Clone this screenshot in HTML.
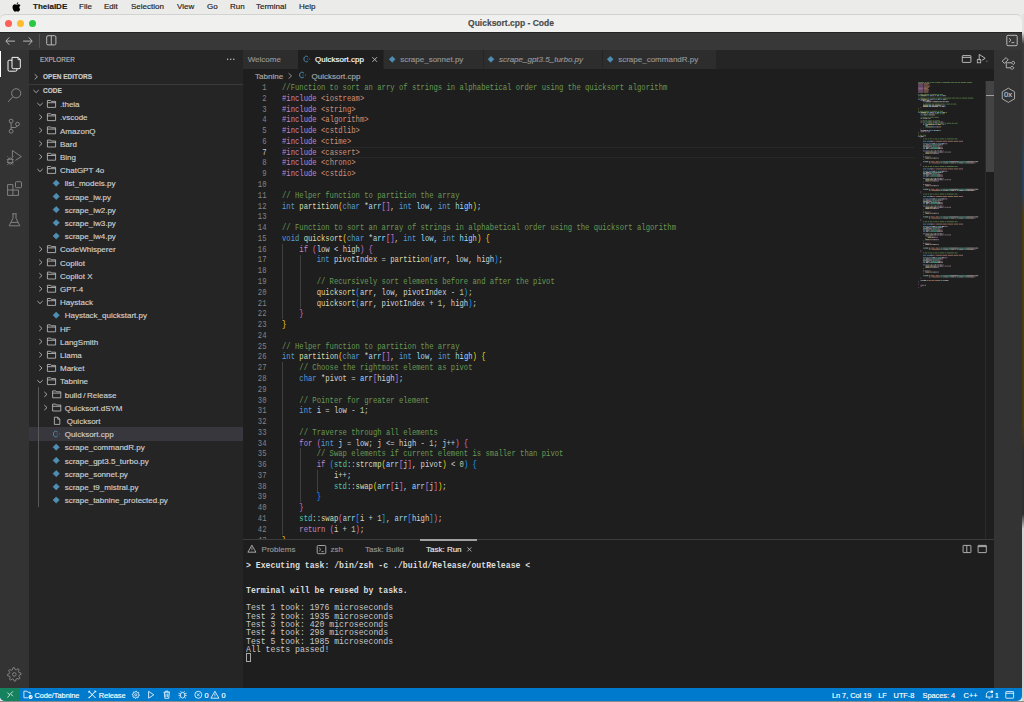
<!DOCTYPE html><html><head><meta charset="utf-8"><style>
*{margin:0;padding:0;box-sizing:border-box}
html,body{width:1024px;height:702px;overflow:hidden;background:#e8e8e6;font-family:"Liberation Sans",sans-serif}
.a{position:absolute}
svg{position:absolute;overflow:visible;left:0;top:0}
.t{position:absolute;white-space:pre;-webkit-text-stroke:0.15px currentColor}
.m{font-family:"Liberation Mono",monospace;-webkit-text-stroke:0}
</style></head><body>
<div class="a" style="left:0px;top:0px;width:1024px;height:14px;background:#ebebe9;"></div>
<svg style="left:12px;top:2px" width="9" height="10" viewBox="0 0 9 10"><path d="M6.2 0.3c0.1 0.8-0.6 1.9-1.5 1.9-0.1-0.8 0.6-1.8 1.5-1.9zM8.2 7.1c-0.3 0.9-1.1 2.6-2 2.6-0.7 0-0.9-0.4-1.6-0.4s-1 0.4-1.6 0.4C2 9.7 0.5 7.3 0.5 5.2c0-2 1.3-2.9 2.3-2.9 0.8 0 1.3 0.4 1.8 0.4 0.4 0 1-0.5 1.9-0.5 0.4 0 1.5 0.1 2 1.1-1.7 1-1.4 3.3-0.3 3.8z" fill="#000"/></svg>
<div class="t" style="left:33px;top:2px;font-size:8px;line-height:10px;color:#1a1a1a;font-weight:bold">TheiaIDE</div>
<div class="t" style="left:79px;top:2px;font-size:8px;line-height:10px;color:#1a1a1a;">File</div>
<div class="t" style="left:104px;top:2px;font-size:8px;line-height:10px;color:#1a1a1a;">Edit</div>
<div class="t" style="left:131px;top:2px;font-size:8px;line-height:10px;color:#1a1a1a;">Selection</div>
<div class="t" style="left:177px;top:2px;font-size:8px;line-height:10px;color:#1a1a1a;">View</div>
<div class="t" style="left:207px;top:2px;font-size:8px;line-height:10px;color:#1a1a1a;">Go</div>
<div class="t" style="left:230px;top:2px;font-size:8px;line-height:10px;color:#1a1a1a;">Run</div>
<div class="t" style="left:256px;top:2px;font-size:8px;line-height:10px;color:#1a1a1a;">Terminal</div>
<div class="t" style="left:299px;top:2px;font-size:8px;line-height:10px;color:#1a1a1a;">Help</div>
<div class="a" style="left:1022px;top:14px;width:2px;height:688px;background:linear-gradient(#e2e2e0 0px,#e2e2e0 18px,#3a3a3a 30px,#383838 120px,#2a4058 150px,#2a4058 180px,#4a3c18 200px,#4a3c18 410px,#2e2e2e 440px,#2e2e2e 500px,#d4d4d4 515px,#d4d4d4 688px);"></div>
<div class="a" style="left:0px;top:14px;width:1022px;height:18px;background:#f0f0ee;border-top:1px solid #d2d2d0;border-radius:6px 6px 0 0"></div>
<div class="a" style="left:5px;top:19.5px;width:7px;height:7px;background:#fe5f57;border-radius:50%"></div>
<div class="a" style="left:17px;top:19.5px;width:7px;height:7px;background:#febc2e;border-radius:50%"></div>
<div class="a" style="left:29px;top:19.5px;width:7px;height:7px;background:#28c840;border-radius:50%"></div>
<div class="t" style="left:0px;top:18px;font-size:8.5px;line-height:10px;color:#4a4a4a;width:1022px;text-align:center;font-weight:bold">Quicksort.cpp - Code</div>
<div class="a" style="left:0px;top:32px;width:1022px;height:18px;background:#383838;border-top:1px solid #242424"></div>
<div class="a" style="left:0px;top:50px;width:29px;height:638px;background:#333333;"></div>
<div class="a" style="left:29px;top:50px;width:214px;height:638px;background:#252526;"></div>
<div class="a" style="left:243px;top:50px;width:751px;height:489px;background:#1e1e1e;"></div>
<div class="a" style="left:243px;top:50px;width:751px;height:19px;background:#252526;"></div>
<div class="a" style="left:994px;top:50px;width:28px;height:638px;background:#333333;"></div>
<div class="a" style="left:243px;top:539px;width:751px;height:149px;background:#1e1e1e;border-top:1px solid #3c3c3c"></div>
<div class="a" style="left:0px;top:688px;width:1022px;height:13px;background:#007acc;border-radius:0 0 5px 5px"></div>
<div class="a" style="left:0px;top:688px;width:20px;height:13px;background:#16825d;border-radius:0 0 0 5px"></div>
<svg width="1" height="1"><path d="M15 41.1H6.3M9.3 37.4L5.9 41.1L9.3 44.8" fill="none" stroke="#c5c5c5" stroke-width="0.9"/><path d="M23.1 41.1H31.8M28.8 37.4L32.2 41.1L28.8 44.8" fill="none" stroke="#c5c5c5" stroke-width="0.9"/><path d="M39.5 33.8V47.8" stroke="#5a5a5a" stroke-width="0.8"/><rect x="46.7" y="35.7" width="9.2" height="9.2" rx="1.3" fill="none" stroke="#c5c5c5" stroke-width="0.9"/><path d="M51.3 35.7V44.9" stroke="#c5c5c5" stroke-width="0.9"/><rect x="1006.8" y="35.3" width="10.4" height="10.4" rx="1.2" fill="none" stroke="#c5c5c5" stroke-width="0.9"/><path d="M1009 38.3L1011 40.2L1009 42.1M1011.5 42.6H1014.3" fill="none" stroke="#c5c5c5" stroke-width="0.9"/></svg>
<div class="a" style="left:0px;top:51px;width:1.2px;height:26px;background:#ffffff;"></div>
<svg width="1" height="1"><path d="M12 57.4H18.2L20.3 59.5V67.4a1.3 1.3 0 0 1-1.3 1.3H13.3a1.3 1.3 0 0 1-1.3-1.3Z" fill="none" stroke="#ffffff" stroke-width="0.95"/><path d="M12 60.2H9.3a1.3 1.3 0 0 0-1.3 1.3V69.9a1.3 1.3 0 0 0 1.3 1.3H15.6a1.3 1.3 0 0 0 1.3-1.3V68.7" fill="none" stroke="#ffffff" stroke-width="0.95"/><path d="M18 57.4V59.6H20.3" fill="none" stroke="#ffffff" stroke-width="0.8"/></svg>
<svg width="1" height="1"><circle cx="16.2" cy="93.3" r="4.6" fill="none" stroke="#8a8a8a" stroke-width="0.95"/><path d="M13 96.6L8.2 101.8" stroke="#8a8a8a" stroke-width="1"/></svg>
<svg width="1" height="1"><circle cx="11.1" cy="121.1" r="1.9" fill="none" stroke="#8a8a8a" stroke-width="0.9"/><circle cx="17.5" cy="124.1" r="1.9" fill="none" stroke="#8a8a8a" stroke-width="0.9"/><circle cx="11.1" cy="131.2" r="1.9" fill="none" stroke="#8a8a8a" stroke-width="0.9"/><path d="M11.1 123V129.3M17 125.9L15.8 127.5H11.1" fill="none" stroke="#8a8a8a" stroke-width="0.9"/></svg>
<svg width="1" height="1"><path d="M12.4 150.5L21.3 156.6L15.4 160.4M12.4 150.5V157.5" fill="none" stroke="#8a8a8a" stroke-width="0.9"/><ellipse cx="10.3" cy="161" rx="2.6" ry="3" fill="none" stroke="#8a8a8a" stroke-width="0.9"/><path d="M6.8 159.5H13.8M6.9 162.5H13.7M8.3 157.5L7.2 156.4M12.3 157.5L13.4 156.4M8 164.2L7 165.2M12.6 164.2L13.6 165.2" stroke="#8a8a8a" stroke-width="0.7"/></svg>
<svg width="1" height="1"><path d="M7.6 184.6H12.9V190H18.5V195.4H7.6Z M7.6 190H12.9V195.4" fill="none" stroke="#8a8a8a" stroke-width="0.9" stroke-linejoin="round"/><rect x="15.5" y="181.7" width="6" height="6" rx="0.9" fill="none" stroke="#8a8a8a" stroke-width="0.9"/></svg>
<svg width="1" height="1"><path d="M12.2 213.8H16.6M13 213.8V218.2L9.2 225.8H19.8L16 218.2V213.8M11 222.4H18" fill="none" stroke="#8a8a8a" stroke-width="0.9" stroke-linejoin="round"/></svg>
<svg width="1" height="1"><path d="M20.96 673.05L21.10 674.38L19.11 675.34L18.83 676.26L19.97 678.16L19.13 679.19L17.04 678.46L16.19 678.92L15.65 681.06L14.32 681.20L13.36 679.21L12.44 678.93L10.54 680.07L9.51 679.23L10.24 677.14L9.78 676.29L7.64 675.75L7.50 674.42L9.49 673.46L9.77 672.54L8.63 670.64L9.47 669.61L11.56 670.34L12.41 669.88L12.95 667.74L14.28 667.60L15.24 669.59L16.16 669.87L18.06 668.73L19.09 669.57L18.36 671.66L18.82 672.51Z" fill="none" stroke="#8a8a8a" stroke-width="0.9" stroke-linejoin="round"/><circle cx="14.3" cy="674.4" r="1.8" fill="none" stroke="#8a8a8a" stroke-width="0.9"/></svg>
<div class="t" style="left:40px;top:55px;font-size:6.4px;line-height:10px;color:#bbbbbb;">EXPLORER</div>
<svg width="1" height="1"><circle cx="227.60" cy="59.3" r="0.75" fill="#c5c5c5"/><circle cx="230.70" cy="59.3" r="0.75" fill="#c5c5c5"/><circle cx="233.80" cy="59.3" r="0.75" fill="#c5c5c5"/></svg>
<svg width="1" height="1"><path d="M34.7 74.3L37.400000000000006 76.8L34.7 79.3" fill="none" stroke="#c5c5c5" stroke-width="0.8"/></svg>
<div class="t" style="left:43px;top:71.8px;font-size:6.5px;line-height:10px;color:#cccccc;font-weight:bold">OPEN EDITORS</div>
<div class="a" style="left:29px;top:84.2px;width:214px;height:0.8px;background:#3a3a3a;"></div>
<svg width="1" height="1"><path d="M33.4 90.0L36.1 92.6L38.800000000000004 90.0" fill="none" stroke="#c5c5c5" stroke-width="0.8"/></svg>
<div class="t" style="left:43px;top:86.3px;font-size:6.5px;line-height:10px;color:#cccccc;font-weight:bold">CODE</div>
<div class="t" style="left:60px;top:98.2px;font-size:8px;line-height:13.2px;color:#d0d0d0;">.theia</div>
<div class="t" style="left:60px;top:111.4px;font-size:8px;line-height:13.2px;color:#d0d0d0;">.vscode</div>
<div class="t" style="left:60px;top:124.6px;font-size:8px;line-height:13.2px;color:#d0d0d0;">AmazonQ</div>
<div class="t" style="left:60px;top:137.8px;font-size:8px;line-height:13.2px;color:#d0d0d0;">Bard</div>
<div class="t" style="left:60px;top:151.0px;font-size:8px;line-height:13.2px;color:#d0d0d0;">Bing</div>
<div class="t" style="left:60px;top:164.2px;font-size:8px;line-height:13.2px;color:#d0d0d0;">ChatGPT 4o</div>
<div class="t" style="left:64.7px;top:177.4px;font-size:8px;line-height:13.2px;color:#d0d0d0;">list_models.py</div>
<div class="t" style="left:64.7px;top:190.6px;font-size:8px;line-height:13.2px;color:#d0d0d0;">scrape_iw.py</div>
<div class="t" style="left:64.7px;top:203.8px;font-size:8px;line-height:13.2px;color:#d0d0d0;">scrape_iw2.py</div>
<div class="t" style="left:64.7px;top:217.0px;font-size:8px;line-height:13.2px;color:#d0d0d0;">scrape_iw3.py</div>
<div class="t" style="left:64.7px;top:230.2px;font-size:8px;line-height:13.2px;color:#d0d0d0;">scrape_iw4.py</div>
<div class="t" style="left:60px;top:243.4px;font-size:8px;line-height:13.2px;color:#d0d0d0;">CodeWhisperer</div>
<div class="t" style="left:60px;top:256.6px;font-size:8px;line-height:13.2px;color:#d0d0d0;">Copilot</div>
<div class="t" style="left:60px;top:269.8px;font-size:8px;line-height:13.2px;color:#d0d0d0;">Copilot X</div>
<div class="t" style="left:60px;top:283.0px;font-size:8px;line-height:13.2px;color:#d0d0d0;">GPT-4</div>
<div class="t" style="left:60px;top:296.2px;font-size:8px;line-height:13.2px;color:#d0d0d0;">Haystack</div>
<div class="t" style="left:64.7px;top:309.4px;font-size:8px;line-height:13.2px;color:#d0d0d0;">Haystack_quickstart.py</div>
<div class="t" style="left:60px;top:322.6px;font-size:8px;line-height:13.2px;color:#d0d0d0;">HF</div>
<div class="t" style="left:60px;top:335.8px;font-size:8px;line-height:13.2px;color:#d0d0d0;">LangSmith</div>
<div class="t" style="left:60px;top:349.0px;font-size:8px;line-height:13.2px;color:#d0d0d0;">Llama</div>
<div class="t" style="left:60px;top:362.2px;font-size:8px;line-height:13.2px;color:#d0d0d0;">Market</div>
<div class="t" style="left:60px;top:375.4px;font-size:8px;line-height:13.2px;color:#d0d0d0;">Tabnine</div>
<div class="t" style="left:64.7px;top:388.6px;font-size:8px;line-height:13.2px;color:#d0d0d0;">build / Release</div>
<div class="t" style="left:64.7px;top:401.8px;font-size:8px;line-height:13.2px;color:#d0d0d0;">Quicksort.dSYM</div>
<div class="t" style="left:66.7px;top:415.0px;font-size:8px;line-height:13.2px;color:#d0d0d0;">Quicksort</div>
<div class="a" style="left:29px;top:427.4px;width:214px;height:13.2px;background:#37373d;"></div>
<div class="t" style="left:64.7px;top:428.2px;font-size:8px;line-height:13.2px;color:#d0d0d0;">Quicksort.cpp</div>
<div class="t" style="left:64.7px;top:441.4px;font-size:8px;line-height:13.2px;color:#d0d0d0;">scrape_commandR.py</div>
<div class="t" style="left:64.7px;top:454.6px;font-size:8px;line-height:13.2px;color:#d0d0d0;">scrape_gpt3.5_turbo.py</div>
<div class="t" style="left:64.7px;top:467.8px;font-size:8px;line-height:13.2px;color:#d0d0d0;">scrape_sonnet.py</div>
<div class="t" style="left:64.7px;top:481.0px;font-size:8px;line-height:13.2px;color:#d0d0d0;">scrape_t9_mistral.py</div>
<div class="t" style="left:64.7px;top:494.2px;font-size:8px;line-height:13.2px;color:#d0d0d0;">scrape_tabnine_protected.py</div>
<svg width="1" height="1"><path d="M37.3 103.0L40 105.6L42.7 103.0" fill="none" stroke="#c5c5c5" stroke-width="0.8"/><path d="M47.4 100.5H50.6L51.4 101.39999999999999H55.6V107.39999999999999H47.4Z M47.4 102.69999999999999H55.6" fill="none" stroke="#c5c5c5" stroke-width="0.8"/><path d="M39.3 114.7L42.0 117.2L39.3 119.7" fill="none" stroke="#c5c5c5" stroke-width="0.8"/><path d="M47.4 113.7H50.6L51.4 114.6H55.6V120.6H47.4Z M47.4 115.89999999999999H55.6" fill="none" stroke="#c5c5c5" stroke-width="0.8"/><path d="M39.3 127.9L42.0 130.4L39.3 132.9" fill="none" stroke="#c5c5c5" stroke-width="0.8"/><path d="M47.4 126.9H50.6L51.4 127.8H55.6V133.8H47.4Z M47.4 129.1H55.6" fill="none" stroke="#c5c5c5" stroke-width="0.8"/><path d="M39.3 141.1L42.0 143.6L39.3 146.1" fill="none" stroke="#c5c5c5" stroke-width="0.8"/><path d="M47.4 140.1H50.6L51.4 141.0H55.6V147.0H47.4Z M47.4 142.29999999999998H55.6" fill="none" stroke="#c5c5c5" stroke-width="0.8"/><path d="M39.3 154.3L42.0 156.8L39.3 159.3" fill="none" stroke="#c5c5c5" stroke-width="0.8"/><path d="M47.4 153.3H50.6L51.4 154.20000000000002H55.6V160.20000000000002H47.4Z M47.4 155.5H55.6" fill="none" stroke="#c5c5c5" stroke-width="0.8"/><path d="M37.3 169.0L40 171.6L42.7 169.0" fill="none" stroke="#c5c5c5" stroke-width="0.8"/><path d="M47.4 166.5H50.6L51.4 167.4H55.6V173.4H47.4Z M47.4 168.7H55.6" fill="none" stroke="#c5c5c5" stroke-width="0.8"/><path d="M56.2 180.1L59.300000000000004 183.2L56.2 186.29999999999998L53.1 183.2Z" fill="#4f8fb3" stroke="#4f8fb3" stroke-width="0.7" stroke-linejoin="round"/><path d="M56.2 193.29999999999998L59.300000000000004 196.39999999999998L56.2 199.49999999999997L53.1 196.39999999999998Z" fill="#4f8fb3" stroke="#4f8fb3" stroke-width="0.7" stroke-linejoin="round"/><path d="M56.2 206.5L59.300000000000004 209.6L56.2 212.7L53.1 209.6Z" fill="#4f8fb3" stroke="#4f8fb3" stroke-width="0.7" stroke-linejoin="round"/><path d="M56.2 219.70000000000002L59.300000000000004 222.8L56.2 225.9L53.1 222.8Z" fill="#4f8fb3" stroke="#4f8fb3" stroke-width="0.7" stroke-linejoin="round"/><path d="M56.2 232.9L59.300000000000004 236.0L56.2 239.1L53.1 236.0Z" fill="#4f8fb3" stroke="#4f8fb3" stroke-width="0.7" stroke-linejoin="round"/><path d="M39.3 246.7L42.0 249.2L39.3 251.7" fill="none" stroke="#c5c5c5" stroke-width="0.8"/><path d="M47.4 245.7H50.6L51.4 246.6H55.6V252.6H47.4Z M47.4 247.89999999999998H55.6" fill="none" stroke="#c5c5c5" stroke-width="0.8"/><path d="M39.3 259.9L42.0 262.4L39.3 264.9" fill="none" stroke="#c5c5c5" stroke-width="0.8"/><path d="M47.4 258.9H50.6L51.4 259.8H55.6V265.8H47.4Z M47.4 261.1H55.6" fill="none" stroke="#c5c5c5" stroke-width="0.8"/><path d="M39.3 273.1L42.0 275.6L39.3 278.1" fill="none" stroke="#c5c5c5" stroke-width="0.8"/><path d="M47.4 272.1H50.6L51.4 273.00000000000006H55.6V279.00000000000006H47.4Z M47.4 274.30000000000007H55.6" fill="none" stroke="#c5c5c5" stroke-width="0.8"/><path d="M39.3 286.29999999999995L42.0 288.79999999999995L39.3 291.29999999999995" fill="none" stroke="#c5c5c5" stroke-width="0.8"/><path d="M47.4 285.29999999999995H50.6L51.4 286.2H55.6V292.2H47.4Z M47.4 287.5H55.6" fill="none" stroke="#c5c5c5" stroke-width="0.8"/><path d="M37.3 301.0L40 303.6L42.7 301.0" fill="none" stroke="#c5c5c5" stroke-width="0.8"/><path d="M47.4 298.5H50.6L51.4 299.40000000000003H55.6V305.40000000000003H47.4Z M47.4 300.70000000000005H55.6" fill="none" stroke="#c5c5c5" stroke-width="0.8"/><path d="M56.2 312.09999999999997L59.300000000000004 315.2L56.2 318.3L53.1 315.2Z" fill="#4f8fb3" stroke="#4f8fb3" stroke-width="0.7" stroke-linejoin="round"/><path d="M39.3 325.9L42.0 328.4L39.3 330.9" fill="none" stroke="#c5c5c5" stroke-width="0.8"/><path d="M47.4 324.9H50.6L51.4 325.8H55.6V331.8H47.4Z M47.4 327.1H55.6" fill="none" stroke="#c5c5c5" stroke-width="0.8"/><path d="M39.3 339.1L42.0 341.6L39.3 344.1" fill="none" stroke="#c5c5c5" stroke-width="0.8"/><path d="M47.4 338.1H50.6L51.4 339.00000000000006H55.6V345.00000000000006H47.4Z M47.4 340.30000000000007H55.6" fill="none" stroke="#c5c5c5" stroke-width="0.8"/><path d="M39.3 352.29999999999995L42.0 354.79999999999995L39.3 357.29999999999995" fill="none" stroke="#c5c5c5" stroke-width="0.8"/><path d="M47.4 351.29999999999995H50.6L51.4 352.2H55.6V358.2H47.4Z M47.4 353.5H55.6" fill="none" stroke="#c5c5c5" stroke-width="0.8"/><path d="M39.3 365.5L42.0 368.0L39.3 370.5" fill="none" stroke="#c5c5c5" stroke-width="0.8"/><path d="M47.4 364.5H50.6L51.4 365.40000000000003H55.6V371.40000000000003H47.4Z M47.4 366.70000000000005H55.6" fill="none" stroke="#c5c5c5" stroke-width="0.8"/><path d="M37.3 380.2L40 382.8L42.7 380.2" fill="none" stroke="#c5c5c5" stroke-width="0.8"/><path d="M47.4 377.7H50.6L51.4 378.6H55.6V384.6H47.4Z M47.4 379.90000000000003H55.6" fill="none" stroke="#c5c5c5" stroke-width="0.8"/><path d="M44.3 391.9L47.0 394.4L44.3 396.9" fill="none" stroke="#c5c5c5" stroke-width="0.8"/><path d="M52.6 390.9H55.800000000000004L56.6 391.8H60.800000000000004V397.8H52.6Z M52.6 393.1H60.800000000000004" fill="none" stroke="#c5c5c5" stroke-width="0.8"/><path d="M44.3 405.09999999999997L47.0 407.59999999999997L44.3 410.09999999999997" fill="none" stroke="#c5c5c5" stroke-width="0.8"/><path d="M52.6 404.09999999999997H55.800000000000004L56.6 405.0H60.800000000000004V411.0H52.6Z M52.6 406.3H60.800000000000004" fill="none" stroke="#c5c5c5" stroke-width="0.8"/><path d="M54.4 417.19999999999993H57.8L59.8 419.19999999999993V424.4H54.4Z M57.8 417.19999999999993V419.19999999999993H59.8" fill="none" stroke="#c5c5c5" stroke-width="0.8"/><path d="M57.70 432.15C57.20 431.50 56.40 431.15 55.80 431.15C54.30 431.15 53.40 432.45 53.40 434.00C53.40 435.55 54.30 436.85 55.80 436.85C56.40 436.85 57.20 436.50 57.70 435.85" fill="none" stroke="#4f8ab0" stroke-width="0.95"/><path d="M56.30 434.00H57.40" stroke="#4f8ab0" stroke-width="0.7"/><circle cx="59.20" cy="434.00" r="0.55" fill="#4f8ab0"/><path d="M56.2 444.09999999999997L59.300000000000004 447.2L56.2 450.3L53.1 447.2Z" fill="#4f8fb3" stroke="#4f8fb3" stroke-width="0.7" stroke-linejoin="round"/><path d="M56.2 457.29999999999995L59.300000000000004 460.4L56.2 463.5L53.1 460.4Z" fill="#4f8fb3" stroke="#4f8fb3" stroke-width="0.7" stroke-linejoin="round"/><path d="M56.2 470.49999999999994L59.300000000000004 473.59999999999997L56.2 476.7L53.1 473.59999999999997Z" fill="#4f8fb3" stroke="#4f8fb3" stroke-width="0.7" stroke-linejoin="round"/><path d="M56.2 483.69999999999993L59.300000000000004 486.79999999999995L56.2 489.9L53.1 486.79999999999995Z" fill="#4f8fb3" stroke="#4f8fb3" stroke-width="0.7" stroke-linejoin="round"/><path d="M56.2 496.9L59.300000000000004 500.0L56.2 503.1L53.1 500.0Z" fill="#4f8fb3" stroke="#4f8fb3" stroke-width="0.7" stroke-linejoin="round"/></svg>
<div class="a" style="left:38.4px;top:386.7px;width:0.7px;height:120.8px;background:#585858;"></div>
<div class="a" style="left:243px;top:50px;width:55px;height:19px;background:#2d2d2d;"></div>
<div class="t" style="left:247.7px;top:54.5px;font-size:8px;line-height:10px;color:#969696;">Welcome</div>
<div class="a" style="left:298px;top:50px;width:84.5px;height:19px;background:#1e1e1e;"></div>
<svg width="1" height="1"><path d="M308.20 57.15C307.70 56.50 306.90 56.15 306.30 56.15C304.80 56.15 303.90 57.45 303.90 59.00C303.90 60.55 304.80 61.85 306.30 61.85C306.90 61.85 307.70 61.50 308.20 60.85" fill="none" stroke="#4f8ab0" stroke-width="0.95"/><path d="M306.80 59.00H307.90" stroke="#4f8ab0" stroke-width="0.7"/><circle cx="309.70" cy="59.00" r="0.55" fill="#4f8ab0"/></svg>
<div class="t" style="left:315px;top:54.5px;font-size:8px;line-height:10px;color:#ffffff;">Quicksort.cpp</div>
<svg width="1" height="1"><path d="M372.4 57.2L377 61.8M377 57.2L372.4 61.8" stroke="#c5c5c5" stroke-width="0.9"/></svg>
<div class="a" style="left:382.5px;top:50px;width:100px;height:19px;background:#2d2d2d;border-left:1px solid #252526"></div>
<svg width="1" height="1"><path d="M392.2 56.4L395.09999999999997 59.3L392.2 62.199999999999996L389.3 59.3Z" fill="#4f8fb3" stroke="#4f8fb3" stroke-width="0.7" stroke-linejoin="round"/></svg>
<div class="t" style="left:400.2px;top:54.5px;font-size:8px;line-height:10px;color:#969696;">scrape_sonnet.py</div>
<div class="a" style="left:482.5px;top:50px;width:119px;height:19px;background:#2d2d2d;border-left:1px solid #252526"></div>
<svg width="1" height="1"><path d="M491 56.4L493.9 59.3L491 62.199999999999996L488.1 59.3Z" fill="#4f8fb3" stroke="#4f8fb3" stroke-width="0.7" stroke-linejoin="round"/></svg>
<div class="t" style="left:499px;top:54.5px;font-size:8px;line-height:10px;color:#969696;font-style:italic">scrape_gpt3.5_turbo.py</div>
<div class="a" style="left:601.5px;top:50px;width:114px;height:19px;background:#2d2d2d;border-left:1px solid #252526"></div>
<svg width="1" height="1"><path d="M610.2 56.4L613.1 59.3L610.2 62.199999999999996L607.3000000000001 59.3Z" fill="#4f8fb3" stroke="#4f8fb3" stroke-width="0.7" stroke-linejoin="round"/></svg>
<div class="t" style="left:618.2px;top:54.5px;font-size:8px;line-height:10px;color:#969696;">scrape_commandR.py</div>
<svg width="1" height="1"><rect x="962.3" y="55.6" width="8.6" height="6.8" rx="0.5" fill="none" stroke="#c5c5c5" stroke-width="0.9"/><path d="M962.3 57.4H970.9" stroke="#c5c5c5" stroke-width="0.9"/><path d="M979.2 54.4V60.3M979.2 54.4L985.2 58.3L981.8 60.4" fill="none" stroke="#c5c5c5" stroke-width="0.9"/><rect x="977.3" y="59.6" width="3.4" height="3.2" fill="none" stroke="#c5c5c5" stroke-width="0.8"/><path d="M986.2 60.8L987 61.6L987.8 60.8" fill="none" stroke="#c5c5c5" stroke-width="0.5"/></svg>
<div class="t" style="left:255.1px;top:71.7px;font-size:8px;line-height:10px;color:#a9a9a9;">Tabnine</div>
<svg width="1" height="1"><path d="M288.6 73.3L291.6 75.9L288.6 78.5" fill="none" stroke="#a9a9a9" stroke-width="0.8"/></svg>
<svg width="1" height="1"><path d="M303.90 73.15C303.40 72.50 302.60 72.15 302.00 72.15C300.50 72.15 299.60 73.45 299.60 75.00C299.60 76.55 300.50 77.85 302.00 77.85C302.60 77.85 303.40 77.50 303.90 76.85" fill="none" stroke="#4f8ab0" stroke-width="0.95"/><path d="M302.50 75.00H303.60" stroke="#4f8ab0" stroke-width="0.7"/><circle cx="305.40" cy="75.00" r="0.55" fill="#4f8ab0"/></svg>
<div class="t" style="left:311.5px;top:71.7px;font-size:8px;line-height:10px;color:#a9a9a9;">Quicksort.cpp</div>
<div class="a" style="left:282px;top:146.76px;width:632px;height:10.78px;background:transparent;border-top:1px solid #282828;border-bottom:1px solid #282828"></div>
<div class="a" style="left:282.3px;top:243.74px;width:0.7px;height:75.43px;background:#404040;"></div>
<div class="a" style="left:299.62px;top:254.52px;width:0.7px;height:53.88px;background:#404040;"></div>
<div class="a" style="left:282.3px;top:362.28px;width:0.7px;height:172.42px;background:#404040;"></div>
<div class="a" style="left:299.62px;top:448.48px;width:0.7px;height:53.88px;background:#404040;"></div>
<div class="a" style="left:316.94px;top:470.04px;width:0.7px;height:21.55px;background:#404040;"></div>
<div class="a" style="left:243px;top:81px;width:675px;height:458px;overflow:hidden">
<div class="t m" style="left:0;top:2.00px;width:23.5px;text-align:right;font-size:8.3px;line-height:10.776px;transform:scaleX(0.8695);transform-origin:100% 0;color:#858585">1</div>
<div class="t m" style="left:39.30000000000001px;top:2.00px;font-size:8.3px;line-height:10.776px;transform:scaleX(0.8695);transform-origin:0 0"><span style="color:#6a9955">//Function to sort an arry of strings in alphabetical order using the quicksort algorithm</span></div>
<div class="t m" style="left:0;top:12.78px;width:23.5px;text-align:right;font-size:8.3px;line-height:10.776px;transform:scaleX(0.8695);transform-origin:100% 0;color:#858585">2</div>
<div class="t m" style="left:39.30000000000001px;top:12.78px;font-size:8.3px;line-height:10.776px;transform:scaleX(0.8695);transform-origin:0 0"><span style="color:#c586c0">#include</span><span style="color:#d4d4d4"> </span><span style="color:#ce9178">&lt;iostream&gt;</span></div>
<div class="t m" style="left:0;top:23.55px;width:23.5px;text-align:right;font-size:8.3px;line-height:10.776px;transform:scaleX(0.8695);transform-origin:100% 0;color:#858585">3</div>
<div class="t m" style="left:39.30000000000001px;top:23.55px;font-size:8.3px;line-height:10.776px;transform:scaleX(0.8695);transform-origin:0 0"><span style="color:#c586c0">#include</span><span style="color:#d4d4d4"> </span><span style="color:#ce9178">&lt;string&gt;</span></div>
<div class="t m" style="left:0;top:34.33px;width:23.5px;text-align:right;font-size:8.3px;line-height:10.776px;transform:scaleX(0.8695);transform-origin:100% 0;color:#858585">4</div>
<div class="t m" style="left:39.30000000000001px;top:34.33px;font-size:8.3px;line-height:10.776px;transform:scaleX(0.8695);transform-origin:0 0"><span style="color:#c586c0">#include</span><span style="color:#d4d4d4"> </span><span style="color:#ce9178">&lt;algorithm&gt;</span></div>
<div class="t m" style="left:0;top:45.10px;width:23.5px;text-align:right;font-size:8.3px;line-height:10.776px;transform:scaleX(0.8695);transform-origin:100% 0;color:#858585">5</div>
<div class="t m" style="left:39.30000000000001px;top:45.10px;font-size:8.3px;line-height:10.776px;transform:scaleX(0.8695);transform-origin:0 0"><span style="color:#c586c0">#include</span><span style="color:#d4d4d4"> </span><span style="color:#ce9178">&lt;cstdlib&gt;</span></div>
<div class="t m" style="left:0;top:55.88px;width:23.5px;text-align:right;font-size:8.3px;line-height:10.776px;transform:scaleX(0.8695);transform-origin:100% 0;color:#858585">6</div>
<div class="t m" style="left:39.30000000000001px;top:55.88px;font-size:8.3px;line-height:10.776px;transform:scaleX(0.8695);transform-origin:0 0"><span style="color:#c586c0">#include</span><span style="color:#d4d4d4"> </span><span style="color:#ce9178">&lt;ctime&gt;</span></div>
<div class="t m" style="left:0;top:66.66px;width:23.5px;text-align:right;font-size:8.3px;line-height:10.776px;transform:scaleX(0.8695);transform-origin:100% 0;color:#c6c6c6">7</div>
<div class="t m" style="left:39.30000000000001px;top:66.66px;font-size:8.3px;line-height:10.776px;transform:scaleX(0.8695);transform-origin:0 0"><span style="color:#c586c0">#include</span><span style="color:#d4d4d4"> </span><span style="color:#ce9178">&lt;cassert&gt;</span></div>
<div class="t m" style="left:0;top:77.43px;width:23.5px;text-align:right;font-size:8.3px;line-height:10.776px;transform:scaleX(0.8695);transform-origin:100% 0;color:#858585">8</div>
<div class="t m" style="left:39.30000000000001px;top:77.43px;font-size:8.3px;line-height:10.776px;transform:scaleX(0.8695);transform-origin:0 0"><span style="color:#c586c0">#include</span><span style="color:#d4d4d4"> </span><span style="color:#ce9178">&lt;chrono&gt;</span></div>
<div class="t m" style="left:0;top:88.21px;width:23.5px;text-align:right;font-size:8.3px;line-height:10.776px;transform:scaleX(0.8695);transform-origin:100% 0;color:#858585">9</div>
<div class="t m" style="left:39.30000000000001px;top:88.21px;font-size:8.3px;line-height:10.776px;transform:scaleX(0.8695);transform-origin:0 0"><span style="color:#c586c0">#include</span><span style="color:#d4d4d4"> </span><span style="color:#ce9178">&lt;cstdio&gt;</span></div>
<div class="t m" style="left:0;top:98.98px;width:23.5px;text-align:right;font-size:8.3px;line-height:10.776px;transform:scaleX(0.8695);transform-origin:100% 0;color:#858585">10</div>
<div class="t m" style="left:0;top:109.76px;width:23.5px;text-align:right;font-size:8.3px;line-height:10.776px;transform:scaleX(0.8695);transform-origin:100% 0;color:#858585">11</div>
<div class="t m" style="left:39.30000000000001px;top:109.76px;font-size:8.3px;line-height:10.776px;transform:scaleX(0.8695);transform-origin:0 0"><span style="color:#6a9955">// Helper function to partition the array</span></div>
<div class="t m" style="left:0;top:120.54px;width:23.5px;text-align:right;font-size:8.3px;line-height:10.776px;transform:scaleX(0.8695);transform-origin:100% 0;color:#858585">12</div>
<div class="t m" style="left:39.30000000000001px;top:120.54px;font-size:8.3px;line-height:10.776px;transform:scaleX(0.8695);transform-origin:0 0"><span style="color:#569cd6">int</span><span style="color:#d4d4d4"> </span><span style="color:#dcdcaa">partition</span><span style="color:#ffd700">(</span><span style="color:#569cd6">char</span><span style="color:#d4d4d4"> *</span><span style="color:#9cdcfe">arr</span><span style="color:#da70d6">[]</span><span style="color:#d4d4d4">, </span><span style="color:#569cd6">int</span><span style="color:#d4d4d4"> </span><span style="color:#9cdcfe">low</span><span style="color:#d4d4d4">, </span><span style="color:#569cd6">int</span><span style="color:#d4d4d4"> </span><span style="color:#9cdcfe">high</span><span style="color:#ffd700">)</span><span style="color:#d4d4d4">;</span></div>
<div class="t m" style="left:0;top:131.31px;width:23.5px;text-align:right;font-size:8.3px;line-height:10.776px;transform:scaleX(0.8695);transform-origin:100% 0;color:#858585">13</div>
<div class="t m" style="left:0;top:142.09px;width:23.5px;text-align:right;font-size:8.3px;line-height:10.776px;transform:scaleX(0.8695);transform-origin:100% 0;color:#858585">14</div>
<div class="t m" style="left:39.30000000000001px;top:142.09px;font-size:8.3px;line-height:10.776px;transform:scaleX(0.8695);transform-origin:0 0"><span style="color:#6a9955">// Function to sort an array of strings in alphabetical order using the quicksort algorithm</span></div>
<div class="t m" style="left:0;top:152.86px;width:23.5px;text-align:right;font-size:8.3px;line-height:10.776px;transform:scaleX(0.8695);transform-origin:100% 0;color:#858585">15</div>
<div class="t m" style="left:39.30000000000001px;top:152.86px;font-size:8.3px;line-height:10.776px;transform:scaleX(0.8695);transform-origin:0 0"><span style="color:#569cd6">void</span><span style="color:#d4d4d4"> </span><span style="color:#dcdcaa">quicksort</span><span style="color:#ffd700">(</span><span style="color:#569cd6">char</span><span style="color:#d4d4d4"> *</span><span style="color:#9cdcfe">arr</span><span style="color:#da70d6">[]</span><span style="color:#d4d4d4">, </span><span style="color:#569cd6">int</span><span style="color:#d4d4d4"> </span><span style="color:#9cdcfe">low</span><span style="color:#d4d4d4">, </span><span style="color:#569cd6">int</span><span style="color:#d4d4d4"> </span><span style="color:#9cdcfe">high</span><span style="color:#ffd700">)</span><span style="color:#d4d4d4"> </span><span style="color:#ffd700">{</span></div>
<div class="t m" style="left:0;top:163.64px;width:23.5px;text-align:right;font-size:8.3px;line-height:10.776px;transform:scaleX(0.8695);transform-origin:100% 0;color:#858585">16</div>
<div class="t m" style="left:39.30000000000001px;top:163.64px;font-size:8.3px;line-height:10.776px;transform:scaleX(0.8695);transform-origin:0 0"><span style="color:#d4d4d4">    </span><span style="color:#c586c0">if</span><span style="color:#d4d4d4"> </span><span style="color:#da70d6">(</span><span style="color:#d4d4d4">low &lt; high</span><span style="color:#da70d6">)</span><span style="color:#d4d4d4"> </span><span style="color:#da70d6">{</span></div>
<div class="t m" style="left:0;top:174.42px;width:23.5px;text-align:right;font-size:8.3px;line-height:10.776px;transform:scaleX(0.8695);transform-origin:100% 0;color:#858585">17</div>
<div class="t m" style="left:39.30000000000001px;top:174.42px;font-size:8.3px;line-height:10.776px;transform:scaleX(0.8695);transform-origin:0 0"><span style="color:#d4d4d4">        </span><span style="color:#569cd6">int</span><span style="color:#d4d4d4"> pivotIndex = </span><span style="color:#dcdcaa">partition</span><span style="color:#179fff">(</span><span style="color:#d4d4d4">arr, low, high</span><span style="color:#179fff">)</span><span style="color:#d4d4d4">;</span></div>
<div class="t m" style="left:0;top:185.19px;width:23.5px;text-align:right;font-size:8.3px;line-height:10.776px;transform:scaleX(0.8695);transform-origin:100% 0;color:#858585">18</div>
<div class="t m" style="left:0;top:195.97px;width:23.5px;text-align:right;font-size:8.3px;line-height:10.776px;transform:scaleX(0.8695);transform-origin:100% 0;color:#858585">19</div>
<div class="t m" style="left:39.30000000000001px;top:195.97px;font-size:8.3px;line-height:10.776px;transform:scaleX(0.8695);transform-origin:0 0"><span style="color:#6a9955">        // Recursively sort elements before and after the pivot</span></div>
<div class="t m" style="left:0;top:206.74px;width:23.5px;text-align:right;font-size:8.3px;line-height:10.776px;transform:scaleX(0.8695);transform-origin:100% 0;color:#858585">20</div>
<div class="t m" style="left:39.30000000000001px;top:206.74px;font-size:8.3px;line-height:10.776px;transform:scaleX(0.8695);transform-origin:0 0"><span style="color:#d4d4d4">        </span><span style="color:#dcdcaa">quicksort</span><span style="color:#179fff">(</span><span style="color:#d4d4d4">arr, low, pivotIndex - </span><span style="color:#b5cea8">1</span><span style="color:#179fff">)</span><span style="color:#d4d4d4">;</span></div>
<div class="t m" style="left:0;top:217.52px;width:23.5px;text-align:right;font-size:8.3px;line-height:10.776px;transform:scaleX(0.8695);transform-origin:100% 0;color:#858585">21</div>
<div class="t m" style="left:39.30000000000001px;top:217.52px;font-size:8.3px;line-height:10.776px;transform:scaleX(0.8695);transform-origin:0 0"><span style="color:#d4d4d4">        </span><span style="color:#dcdcaa">quicksort</span><span style="color:#179fff">(</span><span style="color:#d4d4d4">arr, pivotIndex + </span><span style="color:#b5cea8">1</span><span style="color:#d4d4d4">, high</span><span style="color:#179fff">)</span><span style="color:#d4d4d4">;</span></div>
<div class="t m" style="left:0;top:228.30px;width:23.5px;text-align:right;font-size:8.3px;line-height:10.776px;transform:scaleX(0.8695);transform-origin:100% 0;color:#858585">22</div>
<div class="t m" style="left:39.30000000000001px;top:228.30px;font-size:8.3px;line-height:10.776px;transform:scaleX(0.8695);transform-origin:0 0"><span style="color:#d4d4d4">    </span><span style="color:#da70d6">}</span></div>
<div class="t m" style="left:0;top:239.07px;width:23.5px;text-align:right;font-size:8.3px;line-height:10.776px;transform:scaleX(0.8695);transform-origin:100% 0;color:#858585">23</div>
<div class="t m" style="left:39.30000000000001px;top:239.07px;font-size:8.3px;line-height:10.776px;transform:scaleX(0.8695);transform-origin:0 0"><span style="color:#ffd700">}</span></div>
<div class="t m" style="left:0;top:249.85px;width:23.5px;text-align:right;font-size:8.3px;line-height:10.776px;transform:scaleX(0.8695);transform-origin:100% 0;color:#858585">24</div>
<div class="t m" style="left:0;top:260.62px;width:23.5px;text-align:right;font-size:8.3px;line-height:10.776px;transform:scaleX(0.8695);transform-origin:100% 0;color:#858585">25</div>
<div class="t m" style="left:39.30000000000001px;top:260.62px;font-size:8.3px;line-height:10.776px;transform:scaleX(0.8695);transform-origin:0 0"><span style="color:#6a9955">// Helper function to partition the array</span></div>
<div class="t m" style="left:0;top:271.40px;width:23.5px;text-align:right;font-size:8.3px;line-height:10.776px;transform:scaleX(0.8695);transform-origin:100% 0;color:#858585">26</div>
<div class="t m" style="left:39.30000000000001px;top:271.40px;font-size:8.3px;line-height:10.776px;transform:scaleX(0.8695);transform-origin:0 0"><span style="color:#569cd6">int</span><span style="color:#d4d4d4"> </span><span style="color:#dcdcaa">partition</span><span style="color:#ffd700">(</span><span style="color:#569cd6">char</span><span style="color:#d4d4d4"> *</span><span style="color:#9cdcfe">arr</span><span style="color:#da70d6">[]</span><span style="color:#d4d4d4">, </span><span style="color:#569cd6">int</span><span style="color:#d4d4d4"> </span><span style="color:#9cdcfe">low</span><span style="color:#d4d4d4">, </span><span style="color:#569cd6">int</span><span style="color:#d4d4d4"> </span><span style="color:#9cdcfe">high</span><span style="color:#ffd700">)</span><span style="color:#d4d4d4"> </span><span style="color:#ffd700">{</span></div>
<div class="t m" style="left:0;top:282.18px;width:23.5px;text-align:right;font-size:8.3px;line-height:10.776px;transform:scaleX(0.8695);transform-origin:100% 0;color:#858585">27</div>
<div class="t m" style="left:39.30000000000001px;top:282.18px;font-size:8.3px;line-height:10.776px;transform:scaleX(0.8695);transform-origin:0 0"><span style="color:#6a9955">    // Choose the rightmost element as pivot</span></div>
<div class="t m" style="left:0;top:292.95px;width:23.5px;text-align:right;font-size:8.3px;line-height:10.776px;transform:scaleX(0.8695);transform-origin:100% 0;color:#858585">28</div>
<div class="t m" style="left:39.30000000000001px;top:292.95px;font-size:8.3px;line-height:10.776px;transform:scaleX(0.8695);transform-origin:0 0"><span style="color:#d4d4d4">    </span><span style="color:#569cd6">char</span><span style="color:#d4d4d4"> *pivot = </span><span style="color:#9cdcfe">arr</span><span style="color:#da70d6">[</span><span style="color:#d4d4d4">high</span><span style="color:#da70d6">]</span><span style="color:#d4d4d4">;</span></div>
<div class="t m" style="left:0;top:303.73px;width:23.5px;text-align:right;font-size:8.3px;line-height:10.776px;transform:scaleX(0.8695);transform-origin:100% 0;color:#858585">29</div>
<div class="t m" style="left:0;top:314.50px;width:23.5px;text-align:right;font-size:8.3px;line-height:10.776px;transform:scaleX(0.8695);transform-origin:100% 0;color:#858585">30</div>
<div class="t m" style="left:39.30000000000001px;top:314.50px;font-size:8.3px;line-height:10.776px;transform:scaleX(0.8695);transform-origin:0 0"><span style="color:#6a9955">    // Pointer for greater element</span></div>
<div class="t m" style="left:0;top:325.28px;width:23.5px;text-align:right;font-size:8.3px;line-height:10.776px;transform:scaleX(0.8695);transform-origin:100% 0;color:#858585">31</div>
<div class="t m" style="left:39.30000000000001px;top:325.28px;font-size:8.3px;line-height:10.776px;transform:scaleX(0.8695);transform-origin:0 0"><span style="color:#d4d4d4">    </span><span style="color:#569cd6">int</span><span style="color:#d4d4d4"> i = low - </span><span style="color:#b5cea8">1</span><span style="color:#d4d4d4">;</span></div>
<div class="t m" style="left:0;top:336.06px;width:23.5px;text-align:right;font-size:8.3px;line-height:10.776px;transform:scaleX(0.8695);transform-origin:100% 0;color:#858585">32</div>
<div class="t m" style="left:0;top:346.83px;width:23.5px;text-align:right;font-size:8.3px;line-height:10.776px;transform:scaleX(0.8695);transform-origin:100% 0;color:#858585">33</div>
<div class="t m" style="left:39.30000000000001px;top:346.83px;font-size:8.3px;line-height:10.776px;transform:scaleX(0.8695);transform-origin:0 0"><span style="color:#6a9955">    // Traverse through all elements</span></div>
<div class="t m" style="left:0;top:357.61px;width:23.5px;text-align:right;font-size:8.3px;line-height:10.776px;transform:scaleX(0.8695);transform-origin:100% 0;color:#858585">34</div>
<div class="t m" style="left:39.30000000000001px;top:357.61px;font-size:8.3px;line-height:10.776px;transform:scaleX(0.8695);transform-origin:0 0"><span style="color:#d4d4d4">    </span><span style="color:#c586c0">for</span><span style="color:#d4d4d4"> </span><span style="color:#da70d6">(</span><span style="color:#569cd6">int</span><span style="color:#d4d4d4"> j = low; j &lt;= high - </span><span style="color:#b5cea8">1</span><span style="color:#d4d4d4">; j++</span><span style="color:#da70d6">)</span><span style="color:#d4d4d4"> </span><span style="color:#da70d6">{</span></div>
<div class="t m" style="left:0;top:368.38px;width:23.5px;text-align:right;font-size:8.3px;line-height:10.776px;transform:scaleX(0.8695);transform-origin:100% 0;color:#858585">35</div>
<div class="t m" style="left:39.30000000000001px;top:368.38px;font-size:8.3px;line-height:10.776px;transform:scaleX(0.8695);transform-origin:0 0"><span style="color:#6a9955">        // Swap elements if current element is smaller than pivot</span></div>
<div class="t m" style="left:0;top:379.16px;width:23.5px;text-align:right;font-size:8.3px;line-height:10.776px;transform:scaleX(0.8695);transform-origin:100% 0;color:#858585">36</div>
<div class="t m" style="left:39.30000000000001px;top:379.16px;font-size:8.3px;line-height:10.776px;transform:scaleX(0.8695);transform-origin:0 0"><span style="color:#d4d4d4">        </span><span style="color:#c586c0">if</span><span style="color:#d4d4d4"> </span><span style="color:#179fff">(</span><span style="color:#4ec9b0">std</span><span style="color:#d4d4d4">::</span><span style="color:#dcdcaa">strcmp</span><span style="color:#ffd700">(</span><span style="color:#9cdcfe">arr</span><span style="color:#da70d6">[</span><span style="color:#d4d4d4">j</span><span style="color:#da70d6">]</span><span style="color:#d4d4d4">, pivot</span><span style="color:#ffd700">)</span><span style="color:#d4d4d4"> &lt; </span><span style="color:#b5cea8">0</span><span style="color:#179fff">)</span><span style="color:#d4d4d4"> </span><span style="color:#179fff">{</span></div>
<div class="t m" style="left:0;top:389.94px;width:23.5px;text-align:right;font-size:8.3px;line-height:10.776px;transform:scaleX(0.8695);transform-origin:100% 0;color:#858585">37</div>
<div class="t m" style="left:39.30000000000001px;top:389.94px;font-size:8.3px;line-height:10.776px;transform:scaleX(0.8695);transform-origin:0 0"><span style="color:#d4d4d4">            i++;</span></div>
<div class="t m" style="left:0;top:400.71px;width:23.5px;text-align:right;font-size:8.3px;line-height:10.776px;transform:scaleX(0.8695);transform-origin:100% 0;color:#858585">38</div>
<div class="t m" style="left:39.30000000000001px;top:400.71px;font-size:8.3px;line-height:10.776px;transform:scaleX(0.8695);transform-origin:0 0"><span style="color:#d4d4d4">            </span><span style="color:#4ec9b0">std</span><span style="color:#d4d4d4">::</span><span style="color:#dcdcaa">swap</span><span style="color:#ffd700">(</span><span style="color:#9cdcfe">arr</span><span style="color:#da70d6">[</span><span style="color:#d4d4d4">i</span><span style="color:#da70d6">]</span><span style="color:#d4d4d4">, </span><span style="color:#9cdcfe">arr</span><span style="color:#da70d6">[</span><span style="color:#d4d4d4">j</span><span style="color:#da70d6">]</span><span style="color:#ffd700">)</span><span style="color:#d4d4d4">;</span></div>
<div class="t m" style="left:0;top:411.49px;width:23.5px;text-align:right;font-size:8.3px;line-height:10.776px;transform:scaleX(0.8695);transform-origin:100% 0;color:#858585">39</div>
<div class="t m" style="left:39.30000000000001px;top:411.49px;font-size:8.3px;line-height:10.776px;transform:scaleX(0.8695);transform-origin:0 0"><span style="color:#d4d4d4">        </span><span style="color:#179fff">}</span></div>
<div class="t m" style="left:0;top:422.26px;width:23.5px;text-align:right;font-size:8.3px;line-height:10.776px;transform:scaleX(0.8695);transform-origin:100% 0;color:#858585">40</div>
<div class="t m" style="left:39.30000000000001px;top:422.26px;font-size:8.3px;line-height:10.776px;transform:scaleX(0.8695);transform-origin:0 0"><span style="color:#d4d4d4">    </span><span style="color:#da70d6">}</span></div>
<div class="t m" style="left:0;top:433.04px;width:23.5px;text-align:right;font-size:8.3px;line-height:10.776px;transform:scaleX(0.8695);transform-origin:100% 0;color:#858585">41</div>
<div class="t m" style="left:39.30000000000001px;top:433.04px;font-size:8.3px;line-height:10.776px;transform:scaleX(0.8695);transform-origin:0 0"><span style="color:#d4d4d4">    </span><span style="color:#4ec9b0">std</span><span style="color:#d4d4d4">::</span><span style="color:#dcdcaa">swap</span><span style="color:#da70d6">(</span><span style="color:#9cdcfe">arr</span><span style="color:#179fff">[</span><span style="color:#d4d4d4">i + </span><span style="color:#b5cea8">1</span><span style="color:#179fff">]</span><span style="color:#d4d4d4">, </span><span style="color:#9cdcfe">arr</span><span style="color:#179fff">[</span><span style="color:#d4d4d4">high</span><span style="color:#179fff">]</span><span style="color:#da70d6">)</span><span style="color:#d4d4d4">;</span></div>
<div class="t m" style="left:0;top:443.82px;width:23.5px;text-align:right;font-size:8.3px;line-height:10.776px;transform:scaleX(0.8695);transform-origin:100% 0;color:#858585">42</div>
<div class="t m" style="left:39.30000000000001px;top:443.82px;font-size:8.3px;line-height:10.776px;transform:scaleX(0.8695);transform-origin:0 0"><span style="color:#d4d4d4">    </span><span style="color:#c586c0">return</span><span style="color:#d4d4d4"> </span><span style="color:#da70d6">(</span><span style="color:#d4d4d4">i + </span><span style="color:#b5cea8">1</span><span style="color:#da70d6">)</span><span style="color:#d4d4d4">;</span></div>
<div class="t m" style="left:0;top:454.59px;width:23.5px;text-align:right;font-size:8.3px;line-height:10.776px;transform:scaleX(0.8695);transform-origin:100% 0;color:#858585">43</div>
<div class="t m" style="left:39.30000000000001px;top:454.59px;font-size:8.3px;line-height:10.776px;transform:scaleX(0.8695);transform-origin:0 0"><span style="color:#ffd700">}</span></div>
</div>
<div class="a" style="left:985.4px;top:81px;width:8.6px;height:458px;background:#1e1e1e;border-left:0.7px solid #2a2a2a"></div>
<div class="a" style="left:985.6px;top:81px;width:8.4px;height:90.5px;background:#434343;"></div>
<div class="a" style="left:985.6px;top:94.8px;width:8.4px;height:1px;background:#a0a0a0;"></div>
<svg width="1" height="1"><g opacity="0.62"><rect x="918.10" y="82.00" width="6.07" height="1.0" fill="#6a9955"/><rect x="924.78" y="82.00" width="1.21" height="1.0" fill="#6a9955"/><rect x="926.60" y="82.00" width="2.43" height="1.0" fill="#6a9955"/><rect x="929.63" y="82.00" width="1.21" height="1.0" fill="#6a9955"/><rect x="931.45" y="82.00" width="2.43" height="1.0" fill="#6a9955"/><rect x="934.49" y="82.00" width="1.21" height="1.0" fill="#6a9955"/><rect x="936.31" y="82.00" width="4.25" height="1.0" fill="#6a9955"/><rect x="941.17" y="82.00" width="1.21" height="1.0" fill="#6a9955"/><rect x="942.99" y="82.00" width="7.28" height="1.0" fill="#6a9955"/><rect x="950.88" y="82.00" width="3.04" height="1.0" fill="#6a9955"/><rect x="954.52" y="82.00" width="3.04" height="1.0" fill="#6a9955"/><rect x="958.16" y="82.00" width="1.82" height="1.0" fill="#6a9955"/><rect x="960.59" y="82.00" width="5.46" height="1.0" fill="#6a9955"/><rect x="966.66" y="82.00" width="5.46" height="1.0" fill="#6a9955"/><rect x="918.10" y="83.20" width="4.86" height="1.0" fill="#c586c0"/><rect x="923.56" y="83.20" width="6.07" height="1.0" fill="#ce9178"/><rect x="918.10" y="84.40" width="4.86" height="1.0" fill="#c586c0"/><rect x="923.56" y="84.40" width="4.86" height="1.0" fill="#ce9178"/><rect x="918.10" y="85.60" width="4.86" height="1.0" fill="#c586c0"/><rect x="923.56" y="85.60" width="6.68" height="1.0" fill="#ce9178"/><rect x="918.10" y="86.80" width="4.86" height="1.0" fill="#c586c0"/><rect x="923.56" y="86.80" width="5.46" height="1.0" fill="#ce9178"/><rect x="918.10" y="88.00" width="4.86" height="1.0" fill="#c586c0"/><rect x="923.56" y="88.00" width="4.25" height="1.0" fill="#ce9178"/><rect x="918.10" y="89.20" width="4.86" height="1.0" fill="#c586c0"/><rect x="923.56" y="89.20" width="5.46" height="1.0" fill="#ce9178"/><rect x="918.10" y="90.40" width="4.86" height="1.0" fill="#c586c0"/><rect x="923.56" y="90.40" width="4.86" height="1.0" fill="#ce9178"/><rect x="918.10" y="91.60" width="4.86" height="1.0" fill="#c586c0"/><rect x="923.56" y="91.60" width="4.86" height="1.0" fill="#ce9178"/><rect x="918.10" y="94.00" width="1.21" height="1.0" fill="#6a9955"/><rect x="919.92" y="94.00" width="3.64" height="1.0" fill="#6a9955"/><rect x="924.17" y="94.00" width="4.86" height="1.0" fill="#6a9955"/><rect x="929.63" y="94.00" width="1.21" height="1.0" fill="#6a9955"/><rect x="931.45" y="94.00" width="5.46" height="1.0" fill="#6a9955"/><rect x="937.52" y="94.00" width="1.82" height="1.0" fill="#6a9955"/><rect x="939.95" y="94.00" width="3.04" height="1.0" fill="#6a9955"/><rect x="918.10" y="95.20" width="1.82" height="1.0" fill="#569cd6"/><rect x="920.53" y="95.20" width="5.46" height="1.0" fill="#dcdcaa"/><rect x="925.99" y="95.20" width="0.61" height="1.0" fill="#ffd700"/><rect x="926.60" y="95.20" width="2.43" height="1.0" fill="#569cd6"/><rect x="929.63" y="95.20" width="0.61" height="1.0" fill="#d4d4d4"/><rect x="930.24" y="95.20" width="1.82" height="1.0" fill="#9cdcfe"/><rect x="932.06" y="95.20" width="1.21" height="1.0" fill="#da70d6"/><rect x="933.27" y="95.20" width="0.61" height="1.0" fill="#d4d4d4"/><rect x="934.49" y="95.20" width="1.82" height="1.0" fill="#569cd6"/><rect x="936.92" y="95.20" width="1.82" height="1.0" fill="#9cdcfe"/><rect x="938.74" y="95.20" width="0.61" height="1.0" fill="#d4d4d4"/><rect x="939.95" y="95.20" width="1.82" height="1.0" fill="#569cd6"/><rect x="942.38" y="95.20" width="2.43" height="1.0" fill="#9cdcfe"/><rect x="944.81" y="95.20" width="0.61" height="1.0" fill="#ffd700"/><rect x="945.41" y="95.20" width="0.61" height="1.0" fill="#d4d4d4"/><rect x="918.10" y="97.60" width="1.21" height="1.0" fill="#6a9955"/><rect x="919.92" y="97.60" width="4.86" height="1.0" fill="#6a9955"/><rect x="925.38" y="97.60" width="1.21" height="1.0" fill="#6a9955"/><rect x="927.21" y="97.60" width="2.43" height="1.0" fill="#6a9955"/><rect x="930.24" y="97.60" width="1.21" height="1.0" fill="#6a9955"/><rect x="932.06" y="97.60" width="3.04" height="1.0" fill="#6a9955"/><rect x="935.70" y="97.60" width="1.21" height="1.0" fill="#6a9955"/><rect x="937.52" y="97.60" width="4.25" height="1.0" fill="#6a9955"/><rect x="942.38" y="97.60" width="1.21" height="1.0" fill="#6a9955"/><rect x="944.20" y="97.60" width="7.28" height="1.0" fill="#6a9955"/><rect x="952.09" y="97.60" width="3.04" height="1.0" fill="#6a9955"/><rect x="955.73" y="97.60" width="3.04" height="1.0" fill="#6a9955"/><rect x="959.38" y="97.60" width="1.82" height="1.0" fill="#6a9955"/><rect x="961.80" y="97.60" width="5.46" height="1.0" fill="#6a9955"/><rect x="967.87" y="97.60" width="5.46" height="1.0" fill="#6a9955"/><rect x="918.10" y="98.80" width="2.43" height="1.0" fill="#569cd6"/><rect x="921.13" y="98.80" width="5.46" height="1.0" fill="#dcdcaa"/><rect x="926.60" y="98.80" width="0.61" height="1.0" fill="#ffd700"/><rect x="927.21" y="98.80" width="2.43" height="1.0" fill="#569cd6"/><rect x="930.24" y="98.80" width="0.61" height="1.0" fill="#d4d4d4"/><rect x="930.85" y="98.80" width="1.82" height="1.0" fill="#9cdcfe"/><rect x="932.67" y="98.80" width="1.21" height="1.0" fill="#da70d6"/><rect x="933.88" y="98.80" width="0.61" height="1.0" fill="#d4d4d4"/><rect x="935.10" y="98.80" width="1.82" height="1.0" fill="#569cd6"/><rect x="937.52" y="98.80" width="1.82" height="1.0" fill="#9cdcfe"/><rect x="939.35" y="98.80" width="0.61" height="1.0" fill="#d4d4d4"/><rect x="940.56" y="98.80" width="1.82" height="1.0" fill="#569cd6"/><rect x="942.99" y="98.80" width="2.43" height="1.0" fill="#9cdcfe"/><rect x="945.41" y="98.80" width="0.61" height="1.0" fill="#ffd700"/><rect x="946.63" y="98.80" width="0.61" height="1.0" fill="#ffd700"/><rect x="920.53" y="100.00" width="1.21" height="1.0" fill="#c586c0"/><rect x="922.35" y="100.00" width="0.61" height="1.0" fill="#da70d6"/><rect x="922.96" y="100.00" width="1.82" height="1.0" fill="#d4d4d4"/><rect x="925.38" y="100.00" width="0.61" height="1.0" fill="#d4d4d4"/><rect x="926.60" y="100.00" width="2.43" height="1.0" fill="#d4d4d4"/><rect x="929.03" y="100.00" width="0.61" height="1.0" fill="#da70d6"/><rect x="930.24" y="100.00" width="0.61" height="1.0" fill="#da70d6"/><rect x="922.96" y="101.20" width="1.82" height="1.0" fill="#569cd6"/><rect x="925.38" y="101.20" width="6.07" height="1.0" fill="#d4d4d4"/><rect x="932.06" y="101.20" width="0.61" height="1.0" fill="#d4d4d4"/><rect x="933.27" y="101.20" width="5.46" height="1.0" fill="#dcdcaa"/><rect x="938.74" y="101.20" width="0.61" height="1.0" fill="#179fff"/><rect x="939.35" y="101.20" width="2.43" height="1.0" fill="#d4d4d4"/><rect x="942.38" y="101.20" width="2.43" height="1.0" fill="#d4d4d4"/><rect x="945.41" y="101.20" width="2.43" height="1.0" fill="#d4d4d4"/><rect x="947.84" y="101.20" width="0.61" height="1.0" fill="#179fff"/><rect x="948.45" y="101.20" width="0.61" height="1.0" fill="#d4d4d4"/><rect x="922.96" y="103.60" width="1.21" height="1.0" fill="#6a9955"/><rect x="924.78" y="103.60" width="6.68" height="1.0" fill="#6a9955"/><rect x="932.06" y="103.60" width="2.43" height="1.0" fill="#6a9955"/><rect x="935.10" y="103.60" width="4.86" height="1.0" fill="#6a9955"/><rect x="940.56" y="103.60" width="3.64" height="1.0" fill="#6a9955"/><rect x="944.81" y="103.60" width="1.82" height="1.0" fill="#6a9955"/><rect x="947.24" y="103.60" width="3.04" height="1.0" fill="#6a9955"/><rect x="950.88" y="103.60" width="1.82" height="1.0" fill="#6a9955"/><rect x="953.31" y="103.60" width="3.04" height="1.0" fill="#6a9955"/><rect x="922.96" y="104.80" width="5.46" height="1.0" fill="#dcdcaa"/><rect x="928.42" y="104.80" width="0.61" height="1.0" fill="#179fff"/><rect x="929.03" y="104.80" width="2.43" height="1.0" fill="#d4d4d4"/><rect x="932.06" y="104.80" width="2.43" height="1.0" fill="#d4d4d4"/><rect x="935.10" y="104.80" width="6.07" height="1.0" fill="#d4d4d4"/><rect x="941.77" y="104.80" width="0.61" height="1.0" fill="#d4d4d4"/><rect x="942.99" y="104.80" width="0.61" height="1.0" fill="#b5cea8"/><rect x="943.59" y="104.80" width="0.61" height="1.0" fill="#179fff"/><rect x="944.20" y="104.80" width="0.61" height="1.0" fill="#d4d4d4"/><rect x="922.96" y="106.00" width="5.46" height="1.0" fill="#dcdcaa"/><rect x="928.42" y="106.00" width="0.61" height="1.0" fill="#179fff"/><rect x="929.03" y="106.00" width="2.43" height="1.0" fill="#d4d4d4"/><rect x="932.06" y="106.00" width="6.07" height="1.0" fill="#d4d4d4"/><rect x="938.74" y="106.00" width="0.61" height="1.0" fill="#d4d4d4"/><rect x="939.95" y="106.00" width="0.61" height="1.0" fill="#b5cea8"/><rect x="940.56" y="106.00" width="0.61" height="1.0" fill="#d4d4d4"/><rect x="941.77" y="106.00" width="2.43" height="1.0" fill="#d4d4d4"/><rect x="944.20" y="106.00" width="0.61" height="1.0" fill="#179fff"/><rect x="944.81" y="106.00" width="0.61" height="1.0" fill="#d4d4d4"/><rect x="920.53" y="107.20" width="0.61" height="1.0" fill="#da70d6"/><rect x="918.10" y="108.40" width="0.61" height="1.0" fill="#ffd700"/><rect x="918.10" y="110.80" width="1.21" height="1.0" fill="#6a9955"/><rect x="919.92" y="110.80" width="3.64" height="1.0" fill="#6a9955"/><rect x="924.17" y="110.80" width="4.86" height="1.0" fill="#6a9955"/><rect x="929.63" y="110.80" width="1.21" height="1.0" fill="#6a9955"/><rect x="931.45" y="110.80" width="5.46" height="1.0" fill="#6a9955"/><rect x="937.52" y="110.80" width="1.82" height="1.0" fill="#6a9955"/><rect x="939.95" y="110.80" width="3.04" height="1.0" fill="#6a9955"/><rect x="918.10" y="112.00" width="1.82" height="1.0" fill="#569cd6"/><rect x="920.53" y="112.00" width="5.46" height="1.0" fill="#dcdcaa"/><rect x="925.99" y="112.00" width="0.61" height="1.0" fill="#ffd700"/><rect x="926.60" y="112.00" width="2.43" height="1.0" fill="#569cd6"/><rect x="929.63" y="112.00" width="0.61" height="1.0" fill="#d4d4d4"/><rect x="930.24" y="112.00" width="1.82" height="1.0" fill="#9cdcfe"/><rect x="932.06" y="112.00" width="1.21" height="1.0" fill="#da70d6"/><rect x="933.27" y="112.00" width="0.61" height="1.0" fill="#d4d4d4"/><rect x="934.49" y="112.00" width="1.82" height="1.0" fill="#569cd6"/><rect x="936.92" y="112.00" width="1.82" height="1.0" fill="#9cdcfe"/><rect x="938.74" y="112.00" width="0.61" height="1.0" fill="#d4d4d4"/><rect x="939.95" y="112.00" width="1.82" height="1.0" fill="#569cd6"/><rect x="942.38" y="112.00" width="2.43" height="1.0" fill="#9cdcfe"/><rect x="944.81" y="112.00" width="0.61" height="1.0" fill="#ffd700"/><rect x="946.02" y="112.00" width="0.61" height="1.0" fill="#ffd700"/><rect x="920.53" y="113.20" width="1.21" height="1.0" fill="#6a9955"/><rect x="922.35" y="113.20" width="3.64" height="1.0" fill="#6a9955"/><rect x="926.60" y="113.20" width="1.82" height="1.0" fill="#6a9955"/><rect x="929.03" y="113.20" width="5.46" height="1.0" fill="#6a9955"/><rect x="935.10" y="113.20" width="4.25" height="1.0" fill="#6a9955"/><rect x="939.95" y="113.20" width="1.21" height="1.0" fill="#6a9955"/><rect x="941.77" y="113.20" width="3.04" height="1.0" fill="#6a9955"/><rect x="920.53" y="114.40" width="2.43" height="1.0" fill="#569cd6"/><rect x="923.56" y="114.40" width="3.64" height="1.0" fill="#d4d4d4"/><rect x="927.81" y="114.40" width="0.61" height="1.0" fill="#d4d4d4"/><rect x="929.03" y="114.40" width="1.82" height="1.0" fill="#9cdcfe"/><rect x="930.85" y="114.40" width="0.61" height="1.0" fill="#da70d6"/><rect x="931.45" y="114.40" width="2.43" height="1.0" fill="#d4d4d4"/><rect x="933.88" y="114.40" width="0.61" height="1.0" fill="#da70d6"/><rect x="934.49" y="114.40" width="0.61" height="1.0" fill="#d4d4d4"/><rect x="920.53" y="116.80" width="1.21" height="1.0" fill="#6a9955"/><rect x="922.35" y="116.80" width="4.25" height="1.0" fill="#6a9955"/><rect x="927.21" y="116.80" width="1.82" height="1.0" fill="#6a9955"/><rect x="929.63" y="116.80" width="4.25" height="1.0" fill="#6a9955"/><rect x="934.49" y="116.80" width="4.25" height="1.0" fill="#6a9955"/><rect x="920.53" y="118.00" width="1.82" height="1.0" fill="#569cd6"/><rect x="922.96" y="118.00" width="0.61" height="1.0" fill="#d4d4d4"/><rect x="924.17" y="118.00" width="0.61" height="1.0" fill="#d4d4d4"/><rect x="925.38" y="118.00" width="1.82" height="1.0" fill="#d4d4d4"/><rect x="927.81" y="118.00" width="0.61" height="1.0" fill="#d4d4d4"/><rect x="929.03" y="118.00" width="0.61" height="1.0" fill="#b5cea8"/><rect x="929.63" y="118.00" width="0.61" height="1.0" fill="#d4d4d4"/><rect x="920.53" y="120.40" width="1.21" height="1.0" fill="#6a9955"/><rect x="922.35" y="120.40" width="4.86" height="1.0" fill="#6a9955"/><rect x="927.81" y="120.40" width="4.25" height="1.0" fill="#6a9955"/><rect x="932.67" y="120.40" width="1.82" height="1.0" fill="#6a9955"/><rect x="935.10" y="120.40" width="4.86" height="1.0" fill="#6a9955"/><rect x="920.53" y="121.60" width="1.82" height="1.0" fill="#c586c0"/><rect x="922.96" y="121.60" width="0.61" height="1.0" fill="#da70d6"/><rect x="923.56" y="121.60" width="1.82" height="1.0" fill="#569cd6"/><rect x="925.99" y="121.60" width="0.61" height="1.0" fill="#d4d4d4"/><rect x="927.21" y="121.60" width="0.61" height="1.0" fill="#d4d4d4"/><rect x="928.42" y="121.60" width="2.43" height="1.0" fill="#d4d4d4"/><rect x="931.45" y="121.60" width="0.61" height="1.0" fill="#d4d4d4"/><rect x="932.67" y="121.60" width="1.21" height="1.0" fill="#d4d4d4"/><rect x="934.49" y="121.60" width="2.43" height="1.0" fill="#d4d4d4"/><rect x="937.52" y="121.60" width="0.61" height="1.0" fill="#d4d4d4"/><rect x="938.74" y="121.60" width="0.61" height="1.0" fill="#b5cea8"/><rect x="939.35" y="121.60" width="0.61" height="1.0" fill="#d4d4d4"/><rect x="940.56" y="121.60" width="1.82" height="1.0" fill="#d4d4d4"/><rect x="942.38" y="121.60" width="0.61" height="1.0" fill="#da70d6"/><rect x="943.59" y="121.60" width="0.61" height="1.0" fill="#da70d6"/><rect x="922.96" y="122.80" width="1.21" height="1.0" fill="#6a9955"/><rect x="924.78" y="122.80" width="2.43" height="1.0" fill="#6a9955"/><rect x="927.81" y="122.80" width="4.86" height="1.0" fill="#6a9955"/><rect x="933.27" y="122.80" width="1.21" height="1.0" fill="#6a9955"/><rect x="935.10" y="122.80" width="4.25" height="1.0" fill="#6a9955"/><rect x="939.95" y="122.80" width="4.25" height="1.0" fill="#6a9955"/><rect x="944.81" y="122.80" width="1.21" height="1.0" fill="#6a9955"/><rect x="946.63" y="122.80" width="4.25" height="1.0" fill="#6a9955"/><rect x="951.49" y="122.80" width="2.43" height="1.0" fill="#6a9955"/><rect x="954.52" y="122.80" width="3.04" height="1.0" fill="#6a9955"/><rect x="922.96" y="124.00" width="1.21" height="1.0" fill="#c586c0"/><rect x="924.78" y="124.00" width="0.61" height="1.0" fill="#179fff"/><rect x="925.38" y="124.00" width="1.82" height="1.0" fill="#4ec9b0"/><rect x="927.21" y="124.00" width="1.21" height="1.0" fill="#d4d4d4"/><rect x="928.42" y="124.00" width="3.64" height="1.0" fill="#dcdcaa"/><rect x="932.06" y="124.00" width="0.61" height="1.0" fill="#ffd700"/><rect x="932.67" y="124.00" width="1.82" height="1.0" fill="#9cdcfe"/><rect x="934.49" y="124.00" width="0.61" height="1.0" fill="#da70d6"/><rect x="935.10" y="124.00" width="0.61" height="1.0" fill="#d4d4d4"/><rect x="935.70" y="124.00" width="0.61" height="1.0" fill="#da70d6"/><rect x="936.31" y="124.00" width="0.61" height="1.0" fill="#d4d4d4"/><rect x="937.52" y="124.00" width="3.04" height="1.0" fill="#d4d4d4"/><rect x="940.56" y="124.00" width="0.61" height="1.0" fill="#ffd700"/><rect x="941.77" y="124.00" width="0.61" height="1.0" fill="#d4d4d4"/><rect x="942.99" y="124.00" width="0.61" height="1.0" fill="#b5cea8"/><rect x="943.59" y="124.00" width="0.61" height="1.0" fill="#179fff"/><rect x="944.81" y="124.00" width="0.61" height="1.0" fill="#179fff"/><rect x="925.38" y="125.20" width="2.43" height="1.0" fill="#d4d4d4"/><rect x="925.38" y="126.40" width="1.82" height="1.0" fill="#4ec9b0"/><rect x="927.21" y="126.40" width="1.21" height="1.0" fill="#d4d4d4"/><rect x="928.42" y="126.40" width="2.43" height="1.0" fill="#dcdcaa"/><rect x="930.85" y="126.40" width="0.61" height="1.0" fill="#ffd700"/><rect x="931.45" y="126.40" width="1.82" height="1.0" fill="#9cdcfe"/><rect x="933.27" y="126.40" width="0.61" height="1.0" fill="#da70d6"/><rect x="933.88" y="126.40" width="0.61" height="1.0" fill="#d4d4d4"/><rect x="934.49" y="126.40" width="0.61" height="1.0" fill="#da70d6"/><rect x="935.10" y="126.40" width="0.61" height="1.0" fill="#d4d4d4"/><rect x="936.31" y="126.40" width="1.82" height="1.0" fill="#9cdcfe"/><rect x="938.13" y="126.40" width="0.61" height="1.0" fill="#da70d6"/><rect x="938.74" y="126.40" width="0.61" height="1.0" fill="#d4d4d4"/><rect x="939.35" y="126.40" width="0.61" height="1.0" fill="#da70d6"/><rect x="939.95" y="126.40" width="0.61" height="1.0" fill="#ffd700"/><rect x="940.56" y="126.40" width="0.61" height="1.0" fill="#d4d4d4"/><rect x="922.96" y="127.60" width="0.61" height="1.0" fill="#179fff"/><rect x="920.53" y="128.80" width="0.61" height="1.0" fill="#da70d6"/><rect x="920.53" y="130.00" width="1.82" height="1.0" fill="#4ec9b0"/><rect x="922.35" y="130.00" width="1.21" height="1.0" fill="#d4d4d4"/><rect x="923.56" y="130.00" width="2.43" height="1.0" fill="#dcdcaa"/><rect x="925.99" y="130.00" width="0.61" height="1.0" fill="#da70d6"/><rect x="926.60" y="130.00" width="1.82" height="1.0" fill="#9cdcfe"/><rect x="928.42" y="130.00" width="0.61" height="1.0" fill="#179fff"/><rect x="929.03" y="130.00" width="0.61" height="1.0" fill="#d4d4d4"/><rect x="930.24" y="130.00" width="0.61" height="1.0" fill="#d4d4d4"/><rect x="931.45" y="130.00" width="0.61" height="1.0" fill="#b5cea8"/><rect x="932.06" y="130.00" width="0.61" height="1.0" fill="#179fff"/><rect x="932.67" y="130.00" width="0.61" height="1.0" fill="#d4d4d4"/><rect x="933.88" y="130.00" width="1.82" height="1.0" fill="#9cdcfe"/><rect x="935.70" y="130.00" width="0.61" height="1.0" fill="#179fff"/><rect x="936.31" y="130.00" width="2.43" height="1.0" fill="#d4d4d4"/><rect x="938.74" y="130.00" width="0.61" height="1.0" fill="#179fff"/><rect x="939.35" y="130.00" width="0.61" height="1.0" fill="#da70d6"/><rect x="939.95" y="130.00" width="0.61" height="1.0" fill="#d4d4d4"/><rect x="920.53" y="131.20" width="3.64" height="1.0" fill="#c586c0"/><rect x="924.78" y="131.20" width="0.61" height="1.0" fill="#da70d6"/><rect x="925.38" y="131.20" width="0.61" height="1.0" fill="#d4d4d4"/><rect x="926.60" y="131.20" width="0.61" height="1.0" fill="#d4d4d4"/><rect x="927.81" y="131.20" width="0.61" height="1.0" fill="#b5cea8"/><rect x="928.42" y="131.20" width="0.61" height="1.0" fill="#da70d6"/><rect x="929.03" y="131.20" width="0.61" height="1.0" fill="#d4d4d4"/><rect x="918.10" y="132.40" width="0.61" height="1.0" fill="#ffd700"/><rect x="918.10" y="134.80" width="1.21" height="1.0" fill="#6a9955"/><rect x="919.92" y="134.80" width="2.43" height="1.0" fill="#6a9955"/><rect x="922.96" y="134.80" width="3.04" height="1.0" fill="#6a9955"/><rect x="918.10" y="136.00" width="1.82" height="1.0" fill="#569cd6"/><rect x="920.53" y="136.00" width="2.43" height="1.0" fill="#dcdcaa"/><rect x="922.96" y="136.00" width="0.61" height="1.0" fill="#da70d6"/><rect x="923.56" y="136.00" width="0.61" height="1.0" fill="#da70d6"/><rect x="924.78" y="136.00" width="0.61" height="1.0" fill="#da70d6"/><rect x="920.53" y="137.20" width="0.61" height="1.0" fill="#da70d6"/><rect x="922.96" y="138.40" width="1.21" height="1.0" fill="#6a9955"/><rect x="924.78" y="138.40" width="2.43" height="1.0" fill="#6a9955"/><rect x="927.81" y="138.40" width="1.21" height="1.0" fill="#6a9955"/><rect x="929.63" y="138.40" width="2.43" height="1.0" fill="#6a9955"/><rect x="932.67" y="138.40" width="1.21" height="1.0" fill="#6a9955"/><rect x="934.49" y="138.40" width="3.04" height="1.0" fill="#6a9955"/><rect x="938.13" y="138.40" width="1.21" height="1.0" fill="#6a9955"/><rect x="939.95" y="138.40" width="4.25" height="1.0" fill="#6a9955"/><rect x="944.81" y="138.40" width="1.21" height="1.0" fill="#6a9955"/><rect x="946.63" y="138.40" width="7.28" height="1.0" fill="#6a9955"/><rect x="954.52" y="138.40" width="3.04" height="1.0" fill="#6a9955"/><rect x="922.96" y="140.80" width="3.04" height="1.0" fill="#569cd6"/><rect x="926.60" y="140.80" width="2.43" height="1.0" fill="#569cd6"/><rect x="929.03" y="140.80" width="0.61" height="1.0" fill="#d4d4d4"/><rect x="930.24" y="140.80" width="2.43" height="1.0" fill="#d4d4d4"/><rect x="932.67" y="140.80" width="0.61" height="1.0" fill="#da70d6"/><rect x="933.27" y="140.80" width="0.61" height="1.0" fill="#da70d6"/><rect x="934.49" y="140.80" width="0.61" height="1.0" fill="#d4d4d4"/><rect x="935.70" y="140.80" width="0.61" height="1.0" fill="#da70d6"/><rect x="936.31" y="140.80" width="4.86" height="1.0" fill="#ce9178"/><rect x="941.17" y="140.80" width="0.61" height="1.0" fill="#d4d4d4"/><rect x="942.38" y="140.80" width="4.25" height="1.0" fill="#ce9178"/><rect x="946.63" y="140.80" width="0.61" height="1.0" fill="#d4d4d4"/><rect x="947.84" y="140.80" width="4.86" height="1.0" fill="#ce9178"/><rect x="952.70" y="140.80" width="0.61" height="1.0" fill="#d4d4d4"/><rect x="953.91" y="140.80" width="3.64" height="1.0" fill="#ce9178"/><rect x="957.56" y="140.80" width="0.61" height="1.0" fill="#d4d4d4"/><rect x="958.77" y="140.80" width="3.04" height="1.0" fill="#ce9178"/><rect x="961.80" y="140.80" width="0.61" height="1.0" fill="#da70d6"/><rect x="962.41" y="140.80" width="0.61" height="1.0" fill="#d4d4d4"/><rect x="922.96" y="143.20" width="1.82" height="1.0" fill="#569cd6"/><rect x="925.38" y="143.20" width="1.21" height="1.0" fill="#d4d4d4"/><rect x="927.21" y="143.20" width="0.61" height="1.0" fill="#d4d4d4"/><rect x="928.42" y="143.20" width="3.64" height="1.0" fill="#569cd6"/><rect x="932.06" y="143.20" width="0.61" height="1.0" fill="#da70d6"/><rect x="932.67" y="143.20" width="2.43" height="1.0" fill="#d4d4d4"/><rect x="935.10" y="143.20" width="0.61" height="1.0" fill="#da70d6"/><rect x="936.31" y="143.20" width="0.61" height="1.0" fill="#d4d4d4"/><rect x="937.52" y="143.20" width="3.64" height="1.0" fill="#569cd6"/><rect x="941.17" y="143.20" width="0.61" height="1.0" fill="#da70d6"/><rect x="941.77" y="143.20" width="2.43" height="1.0" fill="#d4d4d4"/><rect x="944.20" y="143.20" width="0.61" height="1.0" fill="#da70d6"/><rect x="944.81" y="143.20" width="0.61" height="1.0" fill="#b5cea8"/><rect x="945.41" y="143.20" width="0.61" height="1.0" fill="#da70d6"/><rect x="946.02" y="143.20" width="0.61" height="1.0" fill="#da70d6"/><rect x="946.63" y="143.20" width="0.61" height="1.0" fill="#d4d4d4"/><rect x="922.96" y="144.40" width="2.43" height="1.0" fill="#569cd6"/><rect x="925.99" y="144.40" width="3.64" height="1.0" fill="#d4d4d4"/><rect x="930.24" y="144.40" width="0.61" height="1.0" fill="#d4d4d4"/><rect x="931.45" y="144.40" width="1.82" height="1.0" fill="#4ec9b0"/><rect x="933.27" y="144.40" width="0.61" height="1.0" fill="#d4d4d4"/><rect x="933.88" y="144.40" width="0.61" height="1.0" fill="#d4d4d4"/><rect x="934.49" y="144.40" width="3.64" height="1.0" fill="#4ec9b0"/><rect x="938.13" y="144.40" width="0.61" height="1.0" fill="#d4d4d4"/><rect x="938.74" y="144.40" width="0.61" height="1.0" fill="#d4d4d4"/><rect x="939.35" y="144.40" width="1.82" height="1.0" fill="#dcdcaa"/><rect x="941.17" y="144.40" width="0.61" height="1.0" fill="#da70d6"/><rect x="941.77" y="144.40" width="0.61" height="1.0" fill="#da70d6"/><rect x="942.38" y="144.40" width="0.61" height="1.0" fill="#d4d4d4"/><rect x="922.96" y="145.60" width="5.46" height="1.0" fill="#dcdcaa"/><rect x="928.42" y="145.60" width="0.61" height="1.0" fill="#da70d6"/><rect x="929.03" y="145.60" width="2.43" height="1.0" fill="#d4d4d4"/><rect x="931.45" y="145.60" width="0.61" height="1.0" fill="#d4d4d4"/><rect x="932.67" y="145.60" width="0.61" height="1.0" fill="#b5cea8"/><rect x="933.27" y="145.60" width="0.61" height="1.0" fill="#d4d4d4"/><rect x="934.49" y="145.60" width="1.21" height="1.0" fill="#d4d4d4"/><rect x="936.31" y="145.60" width="0.61" height="1.0" fill="#d4d4d4"/><rect x="937.52" y="145.60" width="0.61" height="1.0" fill="#b5cea8"/><rect x="938.13" y="145.60" width="0.61" height="1.0" fill="#da70d6"/><rect x="938.74" y="145.60" width="0.61" height="1.0" fill="#d4d4d4"/><rect x="922.96" y="146.80" width="2.43" height="1.0" fill="#569cd6"/><rect x="925.99" y="146.80" width="3.04" height="1.0" fill="#d4d4d4"/><rect x="929.63" y="146.80" width="0.61" height="1.0" fill="#d4d4d4"/><rect x="930.85" y="146.80" width="1.82" height="1.0" fill="#4ec9b0"/><rect x="932.67" y="146.80" width="0.61" height="1.0" fill="#d4d4d4"/><rect x="933.27" y="146.80" width="0.61" height="1.0" fill="#d4d4d4"/><rect x="933.88" y="146.80" width="3.64" height="1.0" fill="#4ec9b0"/><rect x="937.52" y="146.80" width="0.61" height="1.0" fill="#d4d4d4"/><rect x="938.13" y="146.80" width="0.61" height="1.0" fill="#d4d4d4"/><rect x="938.74" y="146.80" width="1.82" height="1.0" fill="#dcdcaa"/><rect x="940.56" y="146.80" width="0.61" height="1.0" fill="#da70d6"/><rect x="941.17" y="146.80" width="0.61" height="1.0" fill="#da70d6"/><rect x="941.77" y="146.80" width="0.61" height="1.0" fill="#d4d4d4"/><rect x="922.96" y="148.00" width="2.43" height="1.0" fill="#569cd6"/><rect x="925.99" y="148.00" width="2.43" height="1.0" fill="#d4d4d4"/><rect x="929.03" y="148.00" width="0.61" height="1.0" fill="#d4d4d4"/><rect x="930.24" y="148.00" width="1.82" height="1.0" fill="#4ec9b0"/><rect x="932.06" y="148.00" width="0.61" height="1.0" fill="#d4d4d4"/><rect x="932.67" y="148.00" width="0.61" height="1.0" fill="#d4d4d4"/><rect x="933.27" y="148.00" width="3.64" height="1.0" fill="#4ec9b0"/><rect x="936.92" y="148.00" width="0.61" height="1.0" fill="#d4d4d4"/><rect x="937.52" y="148.00" width="0.61" height="1.0" fill="#d4d4d4"/><rect x="938.13" y="148.00" width="2.43" height="1.0" fill="#dcdcaa"/><rect x="940.56" y="148.00" width="0.61" height="1.0" fill="#da70d6"/><rect x="941.17" y="148.00" width="0.61" height="1.0" fill="#d4d4d4"/><rect x="941.77" y="148.00" width="0.61" height="1.0" fill="#da70d6"/><rect x="942.38" y="148.00" width="0.61" height="1.0" fill="#d4d4d4"/><rect x="922.96" y="150.40" width="1.82" height="1.0" fill="#c586c0"/><rect x="925.38" y="150.40" width="0.61" height="1.0" fill="#da70d6"/><rect x="925.99" y="150.40" width="1.82" height="1.0" fill="#569cd6"/><rect x="928.42" y="150.40" width="0.61" height="1.0" fill="#d4d4d4"/><rect x="929.63" y="150.40" width="0.61" height="1.0" fill="#d4d4d4"/><rect x="930.85" y="150.40" width="0.61" height="1.0" fill="#b5cea8"/><rect x="931.45" y="150.40" width="0.61" height="1.0" fill="#d4d4d4"/><rect x="932.67" y="150.40" width="0.61" height="1.0" fill="#d4d4d4"/><rect x="933.88" y="150.40" width="0.61" height="1.0" fill="#d4d4d4"/><rect x="935.10" y="150.40" width="1.21" height="1.0" fill="#d4d4d4"/><rect x="936.92" y="150.40" width="0.61" height="1.0" fill="#d4d4d4"/><rect x="938.13" y="150.40" width="0.61" height="1.0" fill="#b5cea8"/><rect x="938.74" y="150.40" width="0.61" height="1.0" fill="#d4d4d4"/><rect x="939.95" y="150.40" width="0.61" height="1.0" fill="#d4d4d4"/><rect x="940.56" y="150.40" width="0.61" height="1.0" fill="#d4d4d4"/><rect x="941.17" y="150.40" width="0.61" height="1.0" fill="#d4d4d4"/><rect x="941.77" y="150.40" width="0.61" height="1.0" fill="#da70d6"/><rect x="942.99" y="150.40" width="0.61" height="1.0" fill="#da70d6"/><rect x="925.38" y="151.60" width="3.64" height="1.0" fill="#dcdcaa"/><rect x="929.03" y="151.60" width="0.61" height="1.0" fill="#da70d6"/><rect x="929.63" y="151.60" width="3.64" height="1.0" fill="#dcdcaa"/><rect x="933.27" y="151.60" width="0.61" height="1.0" fill="#da70d6"/><rect x="933.88" y="151.60" width="2.43" height="1.0" fill="#d4d4d4"/><rect x="936.31" y="151.60" width="0.61" height="1.0" fill="#da70d6"/><rect x="936.92" y="151.60" width="0.61" height="1.0" fill="#d4d4d4"/><rect x="937.52" y="151.60" width="0.61" height="1.0" fill="#da70d6"/><rect x="938.13" y="151.60" width="0.61" height="1.0" fill="#d4d4d4"/><rect x="939.35" y="151.60" width="2.43" height="1.0" fill="#d4d4d4"/><rect x="941.77" y="151.60" width="0.61" height="1.0" fill="#da70d6"/><rect x="942.38" y="151.60" width="0.61" height="1.0" fill="#d4d4d4"/><rect x="943.59" y="151.60" width="0.61" height="1.0" fill="#d4d4d4"/><rect x="944.81" y="151.60" width="0.61" height="1.0" fill="#b5cea8"/><rect x="945.41" y="151.60" width="0.61" height="1.0" fill="#da70d6"/><rect x="946.02" y="151.60" width="0.61" height="1.0" fill="#da70d6"/><rect x="947.24" y="151.60" width="0.61" height="1.0" fill="#d4d4d4"/><rect x="947.84" y="151.60" width="0.61" height="1.0" fill="#d4d4d4"/><rect x="949.06" y="151.60" width="0.61" height="1.0" fill="#b5cea8"/><rect x="949.66" y="151.60" width="0.61" height="1.0" fill="#da70d6"/><rect x="950.27" y="151.60" width="0.61" height="1.0" fill="#d4d4d4"/><rect x="925.38" y="152.80" width="3.64" height="1.0" fill="#dcdcaa"/><rect x="929.03" y="152.80" width="0.61" height="1.0" fill="#da70d6"/><rect x="929.63" y="152.80" width="2.43" height="1.0" fill="#ce9178"/><rect x="932.06" y="152.80" width="0.61" height="1.0" fill="#d4d4d4"/><rect x="933.27" y="152.80" width="2.43" height="1.0" fill="#d4d4d4"/><rect x="935.70" y="152.80" width="0.61" height="1.0" fill="#da70d6"/><rect x="936.31" y="152.80" width="0.61" height="1.0" fill="#d4d4d4"/><rect x="936.92" y="152.80" width="0.61" height="1.0" fill="#da70d6"/><rect x="937.52" y="152.80" width="0.61" height="1.0" fill="#da70d6"/><rect x="938.13" y="152.80" width="0.61" height="1.0" fill="#d4d4d4"/><rect x="922.96" y="154.00" width="0.61" height="1.0" fill="#da70d6"/><rect x="922.96" y="156.40" width="1.21" height="1.0" fill="#c586c0"/><rect x="924.78" y="156.40" width="0.61" height="1.0" fill="#da70d6"/><rect x="925.38" y="156.40" width="1.21" height="1.0" fill="#d4d4d4"/><rect x="927.21" y="156.40" width="0.61" height="1.0" fill="#d4d4d4"/><rect x="928.42" y="156.40" width="0.61" height="1.0" fill="#b5cea8"/><rect x="929.03" y="156.40" width="0.61" height="1.0" fill="#da70d6"/><rect x="930.24" y="156.40" width="0.61" height="1.0" fill="#da70d6"/><rect x="925.38" y="157.60" width="3.64" height="1.0" fill="#dcdcaa"/><rect x="929.03" y="157.60" width="0.61" height="1.0" fill="#da70d6"/><rect x="929.63" y="157.60" width="2.43" height="1.0" fill="#ce9178"/><rect x="932.06" y="157.60" width="0.61" height="1.0" fill="#d4d4d4"/><rect x="933.27" y="157.60" width="2.43" height="1.0" fill="#d4d4d4"/><rect x="935.70" y="157.60" width="0.61" height="1.0" fill="#da70d6"/><rect x="936.31" y="157.60" width="0.61" height="1.0" fill="#b5cea8"/><rect x="936.92" y="157.60" width="0.61" height="1.0" fill="#da70d6"/><rect x="937.52" y="157.60" width="0.61" height="1.0" fill="#da70d6"/><rect x="938.13" y="157.60" width="0.61" height="1.0" fill="#d4d4d4"/><rect x="922.96" y="158.80" width="0.61" height="1.0" fill="#da70d6"/><rect x="922.96" y="161.20" width="1.82" height="1.0" fill="#4ec9b0"/><rect x="924.78" y="161.20" width="0.61" height="1.0" fill="#d4d4d4"/><rect x="925.38" y="161.20" width="0.61" height="1.0" fill="#d4d4d4"/><rect x="925.99" y="161.20" width="2.43" height="1.0" fill="#d4d4d4"/><rect x="929.03" y="161.20" width="0.61" height="1.0" fill="#d4d4d4"/><rect x="929.63" y="161.20" width="0.61" height="1.0" fill="#d4d4d4"/><rect x="930.85" y="161.20" width="3.04" height="1.0" fill="#ce9178"/><rect x="934.49" y="161.20" width="0.61" height="1.0" fill="#ce9178"/><rect x="935.70" y="161.20" width="3.04" height="1.0" fill="#ce9178"/><rect x="939.35" y="161.20" width="0.61" height="1.0" fill="#ce9178"/><rect x="940.56" y="161.20" width="0.61" height="1.0" fill="#d4d4d4"/><rect x="941.17" y="161.20" width="0.61" height="1.0" fill="#d4d4d4"/><rect x="942.38" y="161.20" width="1.82" height="1.0" fill="#4ec9b0"/><rect x="944.20" y="161.20" width="0.61" height="1.0" fill="#d4d4d4"/><rect x="944.81" y="161.20" width="0.61" height="1.0" fill="#d4d4d4"/><rect x="945.41" y="161.20" width="3.64" height="1.0" fill="#4ec9b0"/><rect x="949.06" y="161.20" width="0.61" height="1.0" fill="#d4d4d4"/><rect x="949.66" y="161.20" width="0.61" height="1.0" fill="#d4d4d4"/><rect x="950.27" y="161.20" width="7.89" height="1.0" fill="#d4d4d4"/><rect x="958.16" y="161.20" width="0.61" height="1.0" fill="#d4d4d4"/><rect x="958.77" y="161.20" width="1.82" height="1.0" fill="#4ec9b0"/><rect x="960.59" y="161.20" width="0.61" height="1.0" fill="#d4d4d4"/><rect x="961.20" y="161.20" width="0.61" height="1.0" fill="#d4d4d4"/><rect x="961.80" y="161.20" width="3.64" height="1.0" fill="#4ec9b0"/><rect x="965.45" y="161.20" width="0.61" height="1.0" fill="#d4d4d4"/><rect x="966.05" y="161.20" width="0.61" height="1.0" fill="#d4d4d4"/><rect x="966.66" y="161.20" width="7.28" height="1.0" fill="#d4d4d4"/><rect x="973.94" y="161.20" width="0.61" height="1.0" fill="#d4d4d4"/><rect x="974.55" y="161.20" width="0.61" height="1.0" fill="#da70d6"/><rect x="975.16" y="161.20" width="3.04" height="1.0" fill="#d4d4d4"/><rect x="929.03" y="162.40" width="0.61" height="1.0" fill="#d4d4d4"/><rect x="929.63" y="162.40" width="0.61" height="1.0" fill="#d4d4d4"/><rect x="930.85" y="162.40" width="0.61" height="1.0" fill="#ce9178"/><rect x="932.06" y="162.40" width="7.89" height="1.0" fill="#ce9178"/><rect x="940.56" y="162.40" width="0.61" height="1.0" fill="#d4d4d4"/><rect x="941.17" y="162.40" width="0.61" height="1.0" fill="#d4d4d4"/><rect x="942.38" y="162.40" width="1.82" height="1.0" fill="#4ec9b0"/><rect x="944.20" y="162.40" width="0.61" height="1.0" fill="#d4d4d4"/><rect x="944.81" y="162.40" width="0.61" height="1.0" fill="#d4d4d4"/><rect x="945.41" y="162.40" width="2.43" height="1.0" fill="#d4d4d4"/><rect x="947.84" y="162.40" width="0.61" height="1.0" fill="#d4d4d4"/><rect x="949.06" y="162.40" width="1.82" height="1.0" fill="#4ec9b0"/><rect x="950.88" y="162.40" width="0.61" height="1.0" fill="#d4d4d4"/><rect x="951.49" y="162.40" width="0.61" height="1.0" fill="#d4d4d4"/><rect x="952.09" y="162.40" width="2.43" height="1.0" fill="#d4d4d4"/><rect x="955.13" y="162.40" width="0.61" height="1.0" fill="#d4d4d4"/><rect x="955.73" y="162.40" width="0.61" height="1.0" fill="#d4d4d4"/><rect x="956.95" y="162.40" width="1.82" height="1.0" fill="#4ec9b0"/><rect x="958.77" y="162.40" width="0.61" height="1.0" fill="#d4d4d4"/><rect x="959.38" y="162.40" width="0.61" height="1.0" fill="#d4d4d4"/><rect x="959.98" y="162.40" width="3.04" height="1.0" fill="#d4d4d4"/><rect x="963.02" y="162.40" width="0.61" height="1.0" fill="#d4d4d4"/><rect x="964.23" y="162.40" width="1.82" height="1.0" fill="#4ec9b0"/><rect x="966.05" y="162.40" width="0.61" height="1.0" fill="#d4d4d4"/><rect x="966.66" y="162.40" width="0.61" height="1.0" fill="#d4d4d4"/><rect x="967.27" y="162.40" width="2.43" height="1.0" fill="#d4d4d4"/><rect x="969.70" y="162.40" width="0.61" height="1.0" fill="#d4d4d4"/><rect x="970.30" y="162.40" width="3.04" height="1.0" fill="#dcdcaa"/><rect x="973.34" y="162.40" width="0.61" height="1.0" fill="#da70d6"/><rect x="973.94" y="162.40" width="0.61" height="1.0" fill="#da70d6"/><rect x="974.55" y="162.40" width="0.61" height="1.0" fill="#d4d4d4"/><rect x="920.53" y="163.60" width="0.61" height="1.0" fill="#da70d6"/><rect x="920.53" y="164.80" width="0.61" height="1.0" fill="#da70d6"/><rect x="922.96" y="166.00" width="1.21" height="1.0" fill="#6a9955"/><rect x="924.78" y="166.00" width="2.43" height="1.0" fill="#6a9955"/><rect x="927.81" y="166.00" width="1.21" height="1.0" fill="#6a9955"/><rect x="929.63" y="166.00" width="2.43" height="1.0" fill="#6a9955"/><rect x="932.67" y="166.00" width="1.21" height="1.0" fill="#6a9955"/><rect x="934.49" y="166.00" width="3.04" height="1.0" fill="#6a9955"/><rect x="938.13" y="166.00" width="1.21" height="1.0" fill="#6a9955"/><rect x="939.95" y="166.00" width="4.25" height="1.0" fill="#6a9955"/><rect x="944.81" y="166.00" width="1.21" height="1.0" fill="#6a9955"/><rect x="946.63" y="166.00" width="7.28" height="1.0" fill="#6a9955"/><rect x="954.52" y="166.00" width="3.04" height="1.0" fill="#6a9955"/><rect x="922.96" y="168.40" width="3.04" height="1.0" fill="#569cd6"/><rect x="926.60" y="168.40" width="2.43" height="1.0" fill="#569cd6"/><rect x="929.03" y="168.40" width="0.61" height="1.0" fill="#d4d4d4"/><rect x="930.24" y="168.40" width="2.43" height="1.0" fill="#d4d4d4"/><rect x="932.67" y="168.40" width="0.61" height="1.0" fill="#da70d6"/><rect x="933.27" y="168.40" width="0.61" height="1.0" fill="#da70d6"/><rect x="934.49" y="168.40" width="0.61" height="1.0" fill="#d4d4d4"/><rect x="935.70" y="168.40" width="0.61" height="1.0" fill="#da70d6"/><rect x="936.31" y="168.40" width="4.86" height="1.0" fill="#ce9178"/><rect x="941.17" y="168.40" width="0.61" height="1.0" fill="#d4d4d4"/><rect x="942.38" y="168.40" width="4.25" height="1.0" fill="#ce9178"/><rect x="946.63" y="168.40" width="0.61" height="1.0" fill="#d4d4d4"/><rect x="947.84" y="168.40" width="4.86" height="1.0" fill="#ce9178"/><rect x="952.70" y="168.40" width="0.61" height="1.0" fill="#d4d4d4"/><rect x="953.91" y="168.40" width="3.64" height="1.0" fill="#ce9178"/><rect x="957.56" y="168.40" width="0.61" height="1.0" fill="#d4d4d4"/><rect x="958.77" y="168.40" width="3.04" height="1.0" fill="#ce9178"/><rect x="961.80" y="168.40" width="0.61" height="1.0" fill="#da70d6"/><rect x="962.41" y="168.40" width="0.61" height="1.0" fill="#d4d4d4"/><rect x="922.96" y="170.80" width="1.82" height="1.0" fill="#569cd6"/><rect x="925.38" y="170.80" width="1.21" height="1.0" fill="#d4d4d4"/><rect x="927.21" y="170.80" width="0.61" height="1.0" fill="#d4d4d4"/><rect x="928.42" y="170.80" width="3.64" height="1.0" fill="#569cd6"/><rect x="932.06" y="170.80" width="0.61" height="1.0" fill="#da70d6"/><rect x="932.67" y="170.80" width="2.43" height="1.0" fill="#d4d4d4"/><rect x="935.10" y="170.80" width="0.61" height="1.0" fill="#da70d6"/><rect x="936.31" y="170.80" width="0.61" height="1.0" fill="#d4d4d4"/><rect x="937.52" y="170.80" width="3.64" height="1.0" fill="#569cd6"/><rect x="941.17" y="170.80" width="0.61" height="1.0" fill="#da70d6"/><rect x="941.77" y="170.80" width="2.43" height="1.0" fill="#d4d4d4"/><rect x="944.20" y="170.80" width="0.61" height="1.0" fill="#da70d6"/><rect x="944.81" y="170.80" width="0.61" height="1.0" fill="#b5cea8"/><rect x="945.41" y="170.80" width="0.61" height="1.0" fill="#da70d6"/><rect x="946.02" y="170.80" width="0.61" height="1.0" fill="#da70d6"/><rect x="946.63" y="170.80" width="0.61" height="1.0" fill="#d4d4d4"/><rect x="922.96" y="172.00" width="2.43" height="1.0" fill="#569cd6"/><rect x="925.99" y="172.00" width="3.64" height="1.0" fill="#d4d4d4"/><rect x="930.24" y="172.00" width="0.61" height="1.0" fill="#d4d4d4"/><rect x="931.45" y="172.00" width="1.82" height="1.0" fill="#4ec9b0"/><rect x="933.27" y="172.00" width="0.61" height="1.0" fill="#d4d4d4"/><rect x="933.88" y="172.00" width="0.61" height="1.0" fill="#d4d4d4"/><rect x="934.49" y="172.00" width="3.64" height="1.0" fill="#4ec9b0"/><rect x="938.13" y="172.00" width="0.61" height="1.0" fill="#d4d4d4"/><rect x="938.74" y="172.00" width="0.61" height="1.0" fill="#d4d4d4"/><rect x="939.35" y="172.00" width="1.82" height="1.0" fill="#dcdcaa"/><rect x="941.17" y="172.00" width="0.61" height="1.0" fill="#da70d6"/><rect x="941.77" y="172.00" width="0.61" height="1.0" fill="#da70d6"/><rect x="942.38" y="172.00" width="0.61" height="1.0" fill="#d4d4d4"/><rect x="922.96" y="173.20" width="5.46" height="1.0" fill="#dcdcaa"/><rect x="928.42" y="173.20" width="0.61" height="1.0" fill="#da70d6"/><rect x="929.03" y="173.20" width="2.43" height="1.0" fill="#d4d4d4"/><rect x="931.45" y="173.20" width="0.61" height="1.0" fill="#d4d4d4"/><rect x="932.67" y="173.20" width="0.61" height="1.0" fill="#b5cea8"/><rect x="933.27" y="173.20" width="0.61" height="1.0" fill="#d4d4d4"/><rect x="934.49" y="173.20" width="1.21" height="1.0" fill="#d4d4d4"/><rect x="936.31" y="173.20" width="0.61" height="1.0" fill="#d4d4d4"/><rect x="937.52" y="173.20" width="0.61" height="1.0" fill="#b5cea8"/><rect x="938.13" y="173.20" width="0.61" height="1.0" fill="#da70d6"/><rect x="938.74" y="173.20" width="0.61" height="1.0" fill="#d4d4d4"/><rect x="922.96" y="174.40" width="2.43" height="1.0" fill="#569cd6"/><rect x="925.99" y="174.40" width="3.04" height="1.0" fill="#d4d4d4"/><rect x="929.63" y="174.40" width="0.61" height="1.0" fill="#d4d4d4"/><rect x="930.85" y="174.40" width="1.82" height="1.0" fill="#4ec9b0"/><rect x="932.67" y="174.40" width="0.61" height="1.0" fill="#d4d4d4"/><rect x="933.27" y="174.40" width="0.61" height="1.0" fill="#d4d4d4"/><rect x="933.88" y="174.40" width="3.64" height="1.0" fill="#4ec9b0"/><rect x="937.52" y="174.40" width="0.61" height="1.0" fill="#d4d4d4"/><rect x="938.13" y="174.40" width="0.61" height="1.0" fill="#d4d4d4"/><rect x="938.74" y="174.40" width="1.82" height="1.0" fill="#dcdcaa"/><rect x="940.56" y="174.40" width="0.61" height="1.0" fill="#da70d6"/><rect x="941.17" y="174.40" width="0.61" height="1.0" fill="#da70d6"/><rect x="941.77" y="174.40" width="0.61" height="1.0" fill="#d4d4d4"/><rect x="922.96" y="175.60" width="2.43" height="1.0" fill="#569cd6"/><rect x="925.99" y="175.60" width="2.43" height="1.0" fill="#d4d4d4"/><rect x="929.03" y="175.60" width="0.61" height="1.0" fill="#d4d4d4"/><rect x="930.24" y="175.60" width="1.82" height="1.0" fill="#4ec9b0"/><rect x="932.06" y="175.60" width="0.61" height="1.0" fill="#d4d4d4"/><rect x="932.67" y="175.60" width="0.61" height="1.0" fill="#d4d4d4"/><rect x="933.27" y="175.60" width="3.64" height="1.0" fill="#4ec9b0"/><rect x="936.92" y="175.60" width="0.61" height="1.0" fill="#d4d4d4"/><rect x="937.52" y="175.60" width="0.61" height="1.0" fill="#d4d4d4"/><rect x="938.13" y="175.60" width="2.43" height="1.0" fill="#dcdcaa"/><rect x="940.56" y="175.60" width="0.61" height="1.0" fill="#da70d6"/><rect x="941.17" y="175.60" width="0.61" height="1.0" fill="#d4d4d4"/><rect x="941.77" y="175.60" width="0.61" height="1.0" fill="#da70d6"/><rect x="942.38" y="175.60" width="0.61" height="1.0" fill="#d4d4d4"/><rect x="922.96" y="178.00" width="1.82" height="1.0" fill="#c586c0"/><rect x="925.38" y="178.00" width="0.61" height="1.0" fill="#da70d6"/><rect x="925.99" y="178.00" width="1.82" height="1.0" fill="#569cd6"/><rect x="928.42" y="178.00" width="0.61" height="1.0" fill="#d4d4d4"/><rect x="929.63" y="178.00" width="0.61" height="1.0" fill="#d4d4d4"/><rect x="930.85" y="178.00" width="0.61" height="1.0" fill="#b5cea8"/><rect x="931.45" y="178.00" width="0.61" height="1.0" fill="#d4d4d4"/><rect x="932.67" y="178.00" width="0.61" height="1.0" fill="#d4d4d4"/><rect x="933.88" y="178.00" width="0.61" height="1.0" fill="#d4d4d4"/><rect x="935.10" y="178.00" width="1.21" height="1.0" fill="#d4d4d4"/><rect x="936.92" y="178.00" width="0.61" height="1.0" fill="#d4d4d4"/><rect x="938.13" y="178.00" width="0.61" height="1.0" fill="#b5cea8"/><rect x="938.74" y="178.00" width="0.61" height="1.0" fill="#d4d4d4"/><rect x="939.95" y="178.00" width="0.61" height="1.0" fill="#d4d4d4"/><rect x="940.56" y="178.00" width="0.61" height="1.0" fill="#d4d4d4"/><rect x="941.17" y="178.00" width="0.61" height="1.0" fill="#d4d4d4"/><rect x="941.77" y="178.00" width="0.61" height="1.0" fill="#da70d6"/><rect x="942.99" y="178.00" width="0.61" height="1.0" fill="#da70d6"/><rect x="925.38" y="179.20" width="3.64" height="1.0" fill="#dcdcaa"/><rect x="929.03" y="179.20" width="0.61" height="1.0" fill="#da70d6"/><rect x="929.63" y="179.20" width="3.64" height="1.0" fill="#dcdcaa"/><rect x="933.27" y="179.20" width="0.61" height="1.0" fill="#da70d6"/><rect x="933.88" y="179.20" width="2.43" height="1.0" fill="#d4d4d4"/><rect x="936.31" y="179.20" width="0.61" height="1.0" fill="#da70d6"/><rect x="936.92" y="179.20" width="0.61" height="1.0" fill="#d4d4d4"/><rect x="937.52" y="179.20" width="0.61" height="1.0" fill="#da70d6"/><rect x="938.13" y="179.20" width="0.61" height="1.0" fill="#d4d4d4"/><rect x="939.35" y="179.20" width="2.43" height="1.0" fill="#d4d4d4"/><rect x="941.77" y="179.20" width="0.61" height="1.0" fill="#da70d6"/><rect x="942.38" y="179.20" width="0.61" height="1.0" fill="#d4d4d4"/><rect x="943.59" y="179.20" width="0.61" height="1.0" fill="#d4d4d4"/><rect x="944.81" y="179.20" width="0.61" height="1.0" fill="#b5cea8"/><rect x="945.41" y="179.20" width="0.61" height="1.0" fill="#da70d6"/><rect x="946.02" y="179.20" width="0.61" height="1.0" fill="#da70d6"/><rect x="947.24" y="179.20" width="0.61" height="1.0" fill="#d4d4d4"/><rect x="947.84" y="179.20" width="0.61" height="1.0" fill="#d4d4d4"/><rect x="949.06" y="179.20" width="0.61" height="1.0" fill="#b5cea8"/><rect x="949.66" y="179.20" width="0.61" height="1.0" fill="#da70d6"/><rect x="950.27" y="179.20" width="0.61" height="1.0" fill="#d4d4d4"/><rect x="925.38" y="180.40" width="3.64" height="1.0" fill="#dcdcaa"/><rect x="929.03" y="180.40" width="0.61" height="1.0" fill="#da70d6"/><rect x="929.63" y="180.40" width="2.43" height="1.0" fill="#ce9178"/><rect x="932.06" y="180.40" width="0.61" height="1.0" fill="#d4d4d4"/><rect x="933.27" y="180.40" width="2.43" height="1.0" fill="#d4d4d4"/><rect x="935.70" y="180.40" width="0.61" height="1.0" fill="#da70d6"/><rect x="936.31" y="180.40" width="0.61" height="1.0" fill="#d4d4d4"/><rect x="936.92" y="180.40" width="0.61" height="1.0" fill="#da70d6"/><rect x="937.52" y="180.40" width="0.61" height="1.0" fill="#da70d6"/><rect x="938.13" y="180.40" width="0.61" height="1.0" fill="#d4d4d4"/><rect x="922.96" y="181.60" width="0.61" height="1.0" fill="#da70d6"/><rect x="922.96" y="184.00" width="1.21" height="1.0" fill="#c586c0"/><rect x="924.78" y="184.00" width="0.61" height="1.0" fill="#da70d6"/><rect x="925.38" y="184.00" width="1.21" height="1.0" fill="#d4d4d4"/><rect x="927.21" y="184.00" width="0.61" height="1.0" fill="#d4d4d4"/><rect x="928.42" y="184.00" width="0.61" height="1.0" fill="#b5cea8"/><rect x="929.03" y="184.00" width="0.61" height="1.0" fill="#da70d6"/><rect x="930.24" y="184.00" width="0.61" height="1.0" fill="#da70d6"/><rect x="925.38" y="185.20" width="3.64" height="1.0" fill="#dcdcaa"/><rect x="929.03" y="185.20" width="0.61" height="1.0" fill="#da70d6"/><rect x="929.63" y="185.20" width="2.43" height="1.0" fill="#ce9178"/><rect x="932.06" y="185.20" width="0.61" height="1.0" fill="#d4d4d4"/><rect x="933.27" y="185.20" width="2.43" height="1.0" fill="#d4d4d4"/><rect x="935.70" y="185.20" width="0.61" height="1.0" fill="#da70d6"/><rect x="936.31" y="185.20" width="0.61" height="1.0" fill="#b5cea8"/><rect x="936.92" y="185.20" width="0.61" height="1.0" fill="#da70d6"/><rect x="937.52" y="185.20" width="0.61" height="1.0" fill="#da70d6"/><rect x="938.13" y="185.20" width="0.61" height="1.0" fill="#d4d4d4"/><rect x="922.96" y="186.40" width="0.61" height="1.0" fill="#da70d6"/><rect x="922.96" y="188.80" width="1.82" height="1.0" fill="#4ec9b0"/><rect x="924.78" y="188.80" width="0.61" height="1.0" fill="#d4d4d4"/><rect x="925.38" y="188.80" width="0.61" height="1.0" fill="#d4d4d4"/><rect x="925.99" y="188.80" width="2.43" height="1.0" fill="#d4d4d4"/><rect x="929.03" y="188.80" width="0.61" height="1.0" fill="#d4d4d4"/><rect x="929.63" y="188.80" width="0.61" height="1.0" fill="#d4d4d4"/><rect x="930.85" y="188.80" width="3.04" height="1.0" fill="#ce9178"/><rect x="934.49" y="188.80" width="0.61" height="1.0" fill="#ce9178"/><rect x="935.70" y="188.80" width="3.04" height="1.0" fill="#ce9178"/><rect x="939.35" y="188.80" width="0.61" height="1.0" fill="#ce9178"/><rect x="940.56" y="188.80" width="0.61" height="1.0" fill="#d4d4d4"/><rect x="941.17" y="188.80" width="0.61" height="1.0" fill="#d4d4d4"/><rect x="942.38" y="188.80" width="1.82" height="1.0" fill="#4ec9b0"/><rect x="944.20" y="188.80" width="0.61" height="1.0" fill="#d4d4d4"/><rect x="944.81" y="188.80" width="0.61" height="1.0" fill="#d4d4d4"/><rect x="945.41" y="188.80" width="3.64" height="1.0" fill="#4ec9b0"/><rect x="949.06" y="188.80" width="0.61" height="1.0" fill="#d4d4d4"/><rect x="949.66" y="188.80" width="0.61" height="1.0" fill="#d4d4d4"/><rect x="950.27" y="188.80" width="7.89" height="1.0" fill="#d4d4d4"/><rect x="958.16" y="188.80" width="0.61" height="1.0" fill="#d4d4d4"/><rect x="958.77" y="188.80" width="1.82" height="1.0" fill="#4ec9b0"/><rect x="960.59" y="188.80" width="0.61" height="1.0" fill="#d4d4d4"/><rect x="961.20" y="188.80" width="0.61" height="1.0" fill="#d4d4d4"/><rect x="961.80" y="188.80" width="3.64" height="1.0" fill="#4ec9b0"/><rect x="965.45" y="188.80" width="0.61" height="1.0" fill="#d4d4d4"/><rect x="966.05" y="188.80" width="0.61" height="1.0" fill="#d4d4d4"/><rect x="966.66" y="188.80" width="7.28" height="1.0" fill="#d4d4d4"/><rect x="973.94" y="188.80" width="0.61" height="1.0" fill="#d4d4d4"/><rect x="974.55" y="188.80" width="0.61" height="1.0" fill="#da70d6"/><rect x="975.16" y="188.80" width="3.04" height="1.0" fill="#d4d4d4"/><rect x="929.03" y="190.00" width="0.61" height="1.0" fill="#d4d4d4"/><rect x="929.63" y="190.00" width="0.61" height="1.0" fill="#d4d4d4"/><rect x="930.85" y="190.00" width="0.61" height="1.0" fill="#ce9178"/><rect x="932.06" y="190.00" width="7.89" height="1.0" fill="#ce9178"/><rect x="940.56" y="190.00" width="0.61" height="1.0" fill="#d4d4d4"/><rect x="941.17" y="190.00" width="0.61" height="1.0" fill="#d4d4d4"/><rect x="942.38" y="190.00" width="1.82" height="1.0" fill="#4ec9b0"/><rect x="944.20" y="190.00" width="0.61" height="1.0" fill="#d4d4d4"/><rect x="944.81" y="190.00" width="0.61" height="1.0" fill="#d4d4d4"/><rect x="945.41" y="190.00" width="2.43" height="1.0" fill="#d4d4d4"/><rect x="947.84" y="190.00" width="0.61" height="1.0" fill="#d4d4d4"/><rect x="949.06" y="190.00" width="1.82" height="1.0" fill="#4ec9b0"/><rect x="950.88" y="190.00" width="0.61" height="1.0" fill="#d4d4d4"/><rect x="951.49" y="190.00" width="0.61" height="1.0" fill="#d4d4d4"/><rect x="952.09" y="190.00" width="2.43" height="1.0" fill="#d4d4d4"/><rect x="955.13" y="190.00" width="0.61" height="1.0" fill="#d4d4d4"/><rect x="955.73" y="190.00" width="0.61" height="1.0" fill="#d4d4d4"/><rect x="956.95" y="190.00" width="1.82" height="1.0" fill="#4ec9b0"/><rect x="958.77" y="190.00" width="0.61" height="1.0" fill="#d4d4d4"/><rect x="959.38" y="190.00" width="0.61" height="1.0" fill="#d4d4d4"/><rect x="959.98" y="190.00" width="3.04" height="1.0" fill="#d4d4d4"/><rect x="963.02" y="190.00" width="0.61" height="1.0" fill="#d4d4d4"/><rect x="964.23" y="190.00" width="1.82" height="1.0" fill="#4ec9b0"/><rect x="966.05" y="190.00" width="0.61" height="1.0" fill="#d4d4d4"/><rect x="966.66" y="190.00" width="0.61" height="1.0" fill="#d4d4d4"/><rect x="967.27" y="190.00" width="2.43" height="1.0" fill="#d4d4d4"/><rect x="969.70" y="190.00" width="0.61" height="1.0" fill="#d4d4d4"/><rect x="970.30" y="190.00" width="3.04" height="1.0" fill="#dcdcaa"/><rect x="973.34" y="190.00" width="0.61" height="1.0" fill="#da70d6"/><rect x="973.94" y="190.00" width="0.61" height="1.0" fill="#da70d6"/><rect x="974.55" y="190.00" width="0.61" height="1.0" fill="#d4d4d4"/><rect x="920.53" y="191.20" width="0.61" height="1.0" fill="#da70d6"/><rect x="920.53" y="192.40" width="0.61" height="1.0" fill="#da70d6"/><rect x="922.96" y="193.60" width="1.21" height="1.0" fill="#6a9955"/><rect x="924.78" y="193.60" width="2.43" height="1.0" fill="#6a9955"/><rect x="927.81" y="193.60" width="1.21" height="1.0" fill="#6a9955"/><rect x="929.63" y="193.60" width="2.43" height="1.0" fill="#6a9955"/><rect x="932.67" y="193.60" width="1.21" height="1.0" fill="#6a9955"/><rect x="934.49" y="193.60" width="3.04" height="1.0" fill="#6a9955"/><rect x="938.13" y="193.60" width="1.21" height="1.0" fill="#6a9955"/><rect x="939.95" y="193.60" width="4.25" height="1.0" fill="#6a9955"/><rect x="944.81" y="193.60" width="1.21" height="1.0" fill="#6a9955"/><rect x="946.63" y="193.60" width="7.28" height="1.0" fill="#6a9955"/><rect x="954.52" y="193.60" width="3.04" height="1.0" fill="#6a9955"/><rect x="922.96" y="196.00" width="3.04" height="1.0" fill="#569cd6"/><rect x="926.60" y="196.00" width="2.43" height="1.0" fill="#569cd6"/><rect x="929.03" y="196.00" width="0.61" height="1.0" fill="#d4d4d4"/><rect x="930.24" y="196.00" width="2.43" height="1.0" fill="#d4d4d4"/><rect x="932.67" y="196.00" width="0.61" height="1.0" fill="#da70d6"/><rect x="933.27" y="196.00" width="0.61" height="1.0" fill="#da70d6"/><rect x="934.49" y="196.00" width="0.61" height="1.0" fill="#d4d4d4"/><rect x="935.70" y="196.00" width="0.61" height="1.0" fill="#da70d6"/><rect x="936.31" y="196.00" width="4.86" height="1.0" fill="#ce9178"/><rect x="941.17" y="196.00" width="0.61" height="1.0" fill="#d4d4d4"/><rect x="942.38" y="196.00" width="4.25" height="1.0" fill="#ce9178"/><rect x="946.63" y="196.00" width="0.61" height="1.0" fill="#d4d4d4"/><rect x="947.84" y="196.00" width="4.86" height="1.0" fill="#ce9178"/><rect x="952.70" y="196.00" width="0.61" height="1.0" fill="#d4d4d4"/><rect x="953.91" y="196.00" width="3.64" height="1.0" fill="#ce9178"/><rect x="957.56" y="196.00" width="0.61" height="1.0" fill="#d4d4d4"/><rect x="958.77" y="196.00" width="3.04" height="1.0" fill="#ce9178"/><rect x="961.80" y="196.00" width="0.61" height="1.0" fill="#da70d6"/><rect x="962.41" y="196.00" width="0.61" height="1.0" fill="#d4d4d4"/><rect x="922.96" y="198.40" width="1.82" height="1.0" fill="#569cd6"/><rect x="925.38" y="198.40" width="1.21" height="1.0" fill="#d4d4d4"/><rect x="927.21" y="198.40" width="0.61" height="1.0" fill="#d4d4d4"/><rect x="928.42" y="198.40" width="3.64" height="1.0" fill="#569cd6"/><rect x="932.06" y="198.40" width="0.61" height="1.0" fill="#da70d6"/><rect x="932.67" y="198.40" width="2.43" height="1.0" fill="#d4d4d4"/><rect x="935.10" y="198.40" width="0.61" height="1.0" fill="#da70d6"/><rect x="936.31" y="198.40" width="0.61" height="1.0" fill="#d4d4d4"/><rect x="937.52" y="198.40" width="3.64" height="1.0" fill="#569cd6"/><rect x="941.17" y="198.40" width="0.61" height="1.0" fill="#da70d6"/><rect x="941.77" y="198.40" width="2.43" height="1.0" fill="#d4d4d4"/><rect x="944.20" y="198.40" width="0.61" height="1.0" fill="#da70d6"/><rect x="944.81" y="198.40" width="0.61" height="1.0" fill="#b5cea8"/><rect x="945.41" y="198.40" width="0.61" height="1.0" fill="#da70d6"/><rect x="946.02" y="198.40" width="0.61" height="1.0" fill="#da70d6"/><rect x="946.63" y="198.40" width="0.61" height="1.0" fill="#d4d4d4"/><rect x="922.96" y="199.60" width="2.43" height="1.0" fill="#569cd6"/><rect x="925.99" y="199.60" width="3.64" height="1.0" fill="#d4d4d4"/><rect x="930.24" y="199.60" width="0.61" height="1.0" fill="#d4d4d4"/><rect x="931.45" y="199.60" width="1.82" height="1.0" fill="#4ec9b0"/><rect x="933.27" y="199.60" width="0.61" height="1.0" fill="#d4d4d4"/><rect x="933.88" y="199.60" width="0.61" height="1.0" fill="#d4d4d4"/><rect x="934.49" y="199.60" width="3.64" height="1.0" fill="#4ec9b0"/><rect x="938.13" y="199.60" width="0.61" height="1.0" fill="#d4d4d4"/><rect x="938.74" y="199.60" width="0.61" height="1.0" fill="#d4d4d4"/><rect x="939.35" y="199.60" width="1.82" height="1.0" fill="#dcdcaa"/><rect x="941.17" y="199.60" width="0.61" height="1.0" fill="#da70d6"/><rect x="941.77" y="199.60" width="0.61" height="1.0" fill="#da70d6"/><rect x="942.38" y="199.60" width="0.61" height="1.0" fill="#d4d4d4"/><rect x="922.96" y="200.80" width="5.46" height="1.0" fill="#dcdcaa"/><rect x="928.42" y="200.80" width="0.61" height="1.0" fill="#da70d6"/><rect x="929.03" y="200.80" width="2.43" height="1.0" fill="#d4d4d4"/><rect x="931.45" y="200.80" width="0.61" height="1.0" fill="#d4d4d4"/><rect x="932.67" y="200.80" width="0.61" height="1.0" fill="#b5cea8"/><rect x="933.27" y="200.80" width="0.61" height="1.0" fill="#d4d4d4"/><rect x="934.49" y="200.80" width="1.21" height="1.0" fill="#d4d4d4"/><rect x="936.31" y="200.80" width="0.61" height="1.0" fill="#d4d4d4"/><rect x="937.52" y="200.80" width="0.61" height="1.0" fill="#b5cea8"/><rect x="938.13" y="200.80" width="0.61" height="1.0" fill="#da70d6"/><rect x="938.74" y="200.80" width="0.61" height="1.0" fill="#d4d4d4"/><rect x="922.96" y="202.00" width="2.43" height="1.0" fill="#569cd6"/><rect x="925.99" y="202.00" width="3.04" height="1.0" fill="#d4d4d4"/><rect x="929.63" y="202.00" width="0.61" height="1.0" fill="#d4d4d4"/><rect x="930.85" y="202.00" width="1.82" height="1.0" fill="#4ec9b0"/><rect x="932.67" y="202.00" width="0.61" height="1.0" fill="#d4d4d4"/><rect x="933.27" y="202.00" width="0.61" height="1.0" fill="#d4d4d4"/><rect x="933.88" y="202.00" width="3.64" height="1.0" fill="#4ec9b0"/><rect x="937.52" y="202.00" width="0.61" height="1.0" fill="#d4d4d4"/><rect x="938.13" y="202.00" width="0.61" height="1.0" fill="#d4d4d4"/><rect x="938.74" y="202.00" width="1.82" height="1.0" fill="#dcdcaa"/><rect x="940.56" y="202.00" width="0.61" height="1.0" fill="#da70d6"/><rect x="941.17" y="202.00" width="0.61" height="1.0" fill="#da70d6"/><rect x="941.77" y="202.00" width="0.61" height="1.0" fill="#d4d4d4"/><rect x="922.96" y="203.20" width="2.43" height="1.0" fill="#569cd6"/><rect x="925.99" y="203.20" width="2.43" height="1.0" fill="#d4d4d4"/><rect x="929.03" y="203.20" width="0.61" height="1.0" fill="#d4d4d4"/><rect x="930.24" y="203.20" width="1.82" height="1.0" fill="#4ec9b0"/><rect x="932.06" y="203.20" width="0.61" height="1.0" fill="#d4d4d4"/><rect x="932.67" y="203.20" width="0.61" height="1.0" fill="#d4d4d4"/><rect x="933.27" y="203.20" width="3.64" height="1.0" fill="#4ec9b0"/><rect x="936.92" y="203.20" width="0.61" height="1.0" fill="#d4d4d4"/><rect x="937.52" y="203.20" width="0.61" height="1.0" fill="#d4d4d4"/><rect x="938.13" y="203.20" width="2.43" height="1.0" fill="#dcdcaa"/><rect x="940.56" y="203.20" width="0.61" height="1.0" fill="#da70d6"/><rect x="941.17" y="203.20" width="0.61" height="1.0" fill="#d4d4d4"/><rect x="941.77" y="203.20" width="0.61" height="1.0" fill="#da70d6"/><rect x="942.38" y="203.20" width="0.61" height="1.0" fill="#d4d4d4"/><rect x="922.96" y="205.60" width="1.82" height="1.0" fill="#c586c0"/><rect x="925.38" y="205.60" width="0.61" height="1.0" fill="#da70d6"/><rect x="925.99" y="205.60" width="1.82" height="1.0" fill="#569cd6"/><rect x="928.42" y="205.60" width="0.61" height="1.0" fill="#d4d4d4"/><rect x="929.63" y="205.60" width="0.61" height="1.0" fill="#d4d4d4"/><rect x="930.85" y="205.60" width="0.61" height="1.0" fill="#b5cea8"/><rect x="931.45" y="205.60" width="0.61" height="1.0" fill="#d4d4d4"/><rect x="932.67" y="205.60" width="0.61" height="1.0" fill="#d4d4d4"/><rect x="933.88" y="205.60" width="0.61" height="1.0" fill="#d4d4d4"/><rect x="935.10" y="205.60" width="1.21" height="1.0" fill="#d4d4d4"/><rect x="936.92" y="205.60" width="0.61" height="1.0" fill="#d4d4d4"/><rect x="938.13" y="205.60" width="0.61" height="1.0" fill="#b5cea8"/><rect x="938.74" y="205.60" width="0.61" height="1.0" fill="#d4d4d4"/><rect x="939.95" y="205.60" width="0.61" height="1.0" fill="#d4d4d4"/><rect x="940.56" y="205.60" width="0.61" height="1.0" fill="#d4d4d4"/><rect x="941.17" y="205.60" width="0.61" height="1.0" fill="#d4d4d4"/><rect x="941.77" y="205.60" width="0.61" height="1.0" fill="#da70d6"/><rect x="942.99" y="205.60" width="0.61" height="1.0" fill="#da70d6"/><rect x="925.38" y="206.80" width="3.64" height="1.0" fill="#dcdcaa"/><rect x="929.03" y="206.80" width="0.61" height="1.0" fill="#da70d6"/><rect x="929.63" y="206.80" width="3.64" height="1.0" fill="#dcdcaa"/><rect x="933.27" y="206.80" width="0.61" height="1.0" fill="#da70d6"/><rect x="933.88" y="206.80" width="2.43" height="1.0" fill="#d4d4d4"/><rect x="936.31" y="206.80" width="0.61" height="1.0" fill="#da70d6"/><rect x="936.92" y="206.80" width="0.61" height="1.0" fill="#d4d4d4"/><rect x="937.52" y="206.80" width="0.61" height="1.0" fill="#da70d6"/><rect x="938.13" y="206.80" width="0.61" height="1.0" fill="#d4d4d4"/><rect x="939.35" y="206.80" width="2.43" height="1.0" fill="#d4d4d4"/><rect x="941.77" y="206.80" width="0.61" height="1.0" fill="#da70d6"/><rect x="942.38" y="206.80" width="0.61" height="1.0" fill="#d4d4d4"/><rect x="943.59" y="206.80" width="0.61" height="1.0" fill="#d4d4d4"/><rect x="944.81" y="206.80" width="0.61" height="1.0" fill="#b5cea8"/><rect x="945.41" y="206.80" width="0.61" height="1.0" fill="#da70d6"/><rect x="946.02" y="206.80" width="0.61" height="1.0" fill="#da70d6"/><rect x="947.24" y="206.80" width="0.61" height="1.0" fill="#d4d4d4"/><rect x="947.84" y="206.80" width="0.61" height="1.0" fill="#d4d4d4"/><rect x="949.06" y="206.80" width="0.61" height="1.0" fill="#b5cea8"/><rect x="949.66" y="206.80" width="0.61" height="1.0" fill="#da70d6"/><rect x="950.27" y="206.80" width="0.61" height="1.0" fill="#d4d4d4"/><rect x="925.38" y="208.00" width="3.64" height="1.0" fill="#dcdcaa"/><rect x="929.03" y="208.00" width="0.61" height="1.0" fill="#da70d6"/><rect x="929.63" y="208.00" width="2.43" height="1.0" fill="#ce9178"/><rect x="932.06" y="208.00" width="0.61" height="1.0" fill="#d4d4d4"/><rect x="933.27" y="208.00" width="2.43" height="1.0" fill="#d4d4d4"/><rect x="935.70" y="208.00" width="0.61" height="1.0" fill="#da70d6"/><rect x="936.31" y="208.00" width="0.61" height="1.0" fill="#d4d4d4"/><rect x="936.92" y="208.00" width="0.61" height="1.0" fill="#da70d6"/><rect x="937.52" y="208.00" width="0.61" height="1.0" fill="#da70d6"/><rect x="938.13" y="208.00" width="0.61" height="1.0" fill="#d4d4d4"/><rect x="922.96" y="209.20" width="0.61" height="1.0" fill="#da70d6"/><rect x="922.96" y="211.60" width="1.21" height="1.0" fill="#c586c0"/><rect x="924.78" y="211.60" width="0.61" height="1.0" fill="#da70d6"/><rect x="925.38" y="211.60" width="1.21" height="1.0" fill="#d4d4d4"/><rect x="927.21" y="211.60" width="0.61" height="1.0" fill="#d4d4d4"/><rect x="928.42" y="211.60" width="0.61" height="1.0" fill="#b5cea8"/><rect x="929.03" y="211.60" width="0.61" height="1.0" fill="#da70d6"/><rect x="930.24" y="211.60" width="0.61" height="1.0" fill="#da70d6"/><rect x="925.38" y="212.80" width="3.64" height="1.0" fill="#dcdcaa"/><rect x="929.03" y="212.80" width="0.61" height="1.0" fill="#da70d6"/><rect x="929.63" y="212.80" width="2.43" height="1.0" fill="#ce9178"/><rect x="932.06" y="212.80" width="0.61" height="1.0" fill="#d4d4d4"/><rect x="933.27" y="212.80" width="2.43" height="1.0" fill="#d4d4d4"/><rect x="935.70" y="212.80" width="0.61" height="1.0" fill="#da70d6"/><rect x="936.31" y="212.80" width="0.61" height="1.0" fill="#b5cea8"/><rect x="936.92" y="212.80" width="0.61" height="1.0" fill="#da70d6"/><rect x="937.52" y="212.80" width="0.61" height="1.0" fill="#da70d6"/><rect x="938.13" y="212.80" width="0.61" height="1.0" fill="#d4d4d4"/><rect x="922.96" y="214.00" width="0.61" height="1.0" fill="#da70d6"/><rect x="922.96" y="216.40" width="1.82" height="1.0" fill="#4ec9b0"/><rect x="924.78" y="216.40" width="0.61" height="1.0" fill="#d4d4d4"/><rect x="925.38" y="216.40" width="0.61" height="1.0" fill="#d4d4d4"/><rect x="925.99" y="216.40" width="2.43" height="1.0" fill="#d4d4d4"/><rect x="929.03" y="216.40" width="0.61" height="1.0" fill="#d4d4d4"/><rect x="929.63" y="216.40" width="0.61" height="1.0" fill="#d4d4d4"/><rect x="930.85" y="216.40" width="3.04" height="1.0" fill="#ce9178"/><rect x="934.49" y="216.40" width="0.61" height="1.0" fill="#ce9178"/><rect x="935.70" y="216.40" width="3.04" height="1.0" fill="#ce9178"/><rect x="939.35" y="216.40" width="0.61" height="1.0" fill="#ce9178"/><rect x="940.56" y="216.40" width="0.61" height="1.0" fill="#d4d4d4"/><rect x="941.17" y="216.40" width="0.61" height="1.0" fill="#d4d4d4"/><rect x="942.38" y="216.40" width="1.82" height="1.0" fill="#4ec9b0"/><rect x="944.20" y="216.40" width="0.61" height="1.0" fill="#d4d4d4"/><rect x="944.81" y="216.40" width="0.61" height="1.0" fill="#d4d4d4"/><rect x="945.41" y="216.40" width="3.64" height="1.0" fill="#4ec9b0"/><rect x="949.06" y="216.40" width="0.61" height="1.0" fill="#d4d4d4"/><rect x="949.66" y="216.40" width="0.61" height="1.0" fill="#d4d4d4"/><rect x="950.27" y="216.40" width="7.89" height="1.0" fill="#d4d4d4"/><rect x="958.16" y="216.40" width="0.61" height="1.0" fill="#d4d4d4"/><rect x="958.77" y="216.40" width="1.82" height="1.0" fill="#4ec9b0"/><rect x="960.59" y="216.40" width="0.61" height="1.0" fill="#d4d4d4"/><rect x="961.20" y="216.40" width="0.61" height="1.0" fill="#d4d4d4"/><rect x="961.80" y="216.40" width="3.64" height="1.0" fill="#4ec9b0"/><rect x="965.45" y="216.40" width="0.61" height="1.0" fill="#d4d4d4"/><rect x="966.05" y="216.40" width="0.61" height="1.0" fill="#d4d4d4"/><rect x="966.66" y="216.40" width="7.28" height="1.0" fill="#d4d4d4"/><rect x="973.94" y="216.40" width="0.61" height="1.0" fill="#d4d4d4"/><rect x="974.55" y="216.40" width="0.61" height="1.0" fill="#da70d6"/><rect x="975.16" y="216.40" width="3.04" height="1.0" fill="#d4d4d4"/><rect x="929.03" y="217.60" width="0.61" height="1.0" fill="#d4d4d4"/><rect x="929.63" y="217.60" width="0.61" height="1.0" fill="#d4d4d4"/><rect x="930.85" y="217.60" width="0.61" height="1.0" fill="#ce9178"/><rect x="932.06" y="217.60" width="7.89" height="1.0" fill="#ce9178"/><rect x="940.56" y="217.60" width="0.61" height="1.0" fill="#d4d4d4"/><rect x="941.17" y="217.60" width="0.61" height="1.0" fill="#d4d4d4"/><rect x="942.38" y="217.60" width="1.82" height="1.0" fill="#4ec9b0"/><rect x="944.20" y="217.60" width="0.61" height="1.0" fill="#d4d4d4"/><rect x="944.81" y="217.60" width="0.61" height="1.0" fill="#d4d4d4"/><rect x="945.41" y="217.60" width="2.43" height="1.0" fill="#d4d4d4"/><rect x="947.84" y="217.60" width="0.61" height="1.0" fill="#d4d4d4"/><rect x="949.06" y="217.60" width="1.82" height="1.0" fill="#4ec9b0"/><rect x="950.88" y="217.60" width="0.61" height="1.0" fill="#d4d4d4"/><rect x="951.49" y="217.60" width="0.61" height="1.0" fill="#d4d4d4"/><rect x="952.09" y="217.60" width="2.43" height="1.0" fill="#d4d4d4"/><rect x="955.13" y="217.60" width="0.61" height="1.0" fill="#d4d4d4"/><rect x="955.73" y="217.60" width="0.61" height="1.0" fill="#d4d4d4"/><rect x="956.95" y="217.60" width="1.82" height="1.0" fill="#4ec9b0"/><rect x="958.77" y="217.60" width="0.61" height="1.0" fill="#d4d4d4"/><rect x="959.38" y="217.60" width="0.61" height="1.0" fill="#d4d4d4"/><rect x="959.98" y="217.60" width="3.04" height="1.0" fill="#d4d4d4"/><rect x="963.02" y="217.60" width="0.61" height="1.0" fill="#d4d4d4"/><rect x="964.23" y="217.60" width="1.82" height="1.0" fill="#4ec9b0"/><rect x="966.05" y="217.60" width="0.61" height="1.0" fill="#d4d4d4"/><rect x="966.66" y="217.60" width="0.61" height="1.0" fill="#d4d4d4"/><rect x="967.27" y="217.60" width="2.43" height="1.0" fill="#d4d4d4"/><rect x="969.70" y="217.60" width="0.61" height="1.0" fill="#d4d4d4"/><rect x="970.30" y="217.60" width="3.04" height="1.0" fill="#dcdcaa"/><rect x="973.34" y="217.60" width="0.61" height="1.0" fill="#da70d6"/><rect x="973.94" y="217.60" width="0.61" height="1.0" fill="#da70d6"/><rect x="974.55" y="217.60" width="0.61" height="1.0" fill="#d4d4d4"/><rect x="920.53" y="218.80" width="0.61" height="1.0" fill="#da70d6"/><rect x="920.53" y="220.00" width="0.61" height="1.0" fill="#da70d6"/><rect x="922.96" y="221.20" width="1.21" height="1.0" fill="#6a9955"/><rect x="924.78" y="221.20" width="2.43" height="1.0" fill="#6a9955"/><rect x="927.81" y="221.20" width="1.21" height="1.0" fill="#6a9955"/><rect x="929.63" y="221.20" width="2.43" height="1.0" fill="#6a9955"/><rect x="932.67" y="221.20" width="1.21" height="1.0" fill="#6a9955"/><rect x="934.49" y="221.20" width="3.04" height="1.0" fill="#6a9955"/><rect x="938.13" y="221.20" width="1.21" height="1.0" fill="#6a9955"/><rect x="939.95" y="221.20" width="4.25" height="1.0" fill="#6a9955"/><rect x="944.81" y="221.20" width="1.21" height="1.0" fill="#6a9955"/><rect x="946.63" y="221.20" width="7.28" height="1.0" fill="#6a9955"/><rect x="954.52" y="221.20" width="3.04" height="1.0" fill="#6a9955"/><rect x="922.96" y="223.60" width="3.04" height="1.0" fill="#569cd6"/><rect x="926.60" y="223.60" width="2.43" height="1.0" fill="#569cd6"/><rect x="929.03" y="223.60" width="0.61" height="1.0" fill="#d4d4d4"/><rect x="930.24" y="223.60" width="2.43" height="1.0" fill="#d4d4d4"/><rect x="932.67" y="223.60" width="0.61" height="1.0" fill="#da70d6"/><rect x="933.27" y="223.60" width="0.61" height="1.0" fill="#da70d6"/><rect x="934.49" y="223.60" width="0.61" height="1.0" fill="#d4d4d4"/><rect x="935.70" y="223.60" width="0.61" height="1.0" fill="#da70d6"/><rect x="936.31" y="223.60" width="4.86" height="1.0" fill="#ce9178"/><rect x="941.17" y="223.60" width="0.61" height="1.0" fill="#d4d4d4"/><rect x="942.38" y="223.60" width="4.25" height="1.0" fill="#ce9178"/><rect x="946.63" y="223.60" width="0.61" height="1.0" fill="#d4d4d4"/><rect x="947.84" y="223.60" width="4.86" height="1.0" fill="#ce9178"/><rect x="952.70" y="223.60" width="0.61" height="1.0" fill="#d4d4d4"/><rect x="953.91" y="223.60" width="3.64" height="1.0" fill="#ce9178"/><rect x="957.56" y="223.60" width="0.61" height="1.0" fill="#d4d4d4"/><rect x="958.77" y="223.60" width="3.04" height="1.0" fill="#ce9178"/><rect x="961.80" y="223.60" width="0.61" height="1.0" fill="#da70d6"/><rect x="962.41" y="223.60" width="0.61" height="1.0" fill="#d4d4d4"/><rect x="922.96" y="226.00" width="1.82" height="1.0" fill="#569cd6"/><rect x="925.38" y="226.00" width="1.21" height="1.0" fill="#d4d4d4"/><rect x="927.21" y="226.00" width="0.61" height="1.0" fill="#d4d4d4"/><rect x="928.42" y="226.00" width="3.64" height="1.0" fill="#569cd6"/><rect x="932.06" y="226.00" width="0.61" height="1.0" fill="#da70d6"/><rect x="932.67" y="226.00" width="2.43" height="1.0" fill="#d4d4d4"/><rect x="935.10" y="226.00" width="0.61" height="1.0" fill="#da70d6"/><rect x="936.31" y="226.00" width="0.61" height="1.0" fill="#d4d4d4"/><rect x="937.52" y="226.00" width="3.64" height="1.0" fill="#569cd6"/><rect x="941.17" y="226.00" width="0.61" height="1.0" fill="#da70d6"/><rect x="941.77" y="226.00" width="2.43" height="1.0" fill="#d4d4d4"/><rect x="944.20" y="226.00" width="0.61" height="1.0" fill="#da70d6"/><rect x="944.81" y="226.00" width="0.61" height="1.0" fill="#b5cea8"/><rect x="945.41" y="226.00" width="0.61" height="1.0" fill="#da70d6"/><rect x="946.02" y="226.00" width="0.61" height="1.0" fill="#da70d6"/><rect x="946.63" y="226.00" width="0.61" height="1.0" fill="#d4d4d4"/><rect x="922.96" y="227.20" width="2.43" height="1.0" fill="#569cd6"/><rect x="925.99" y="227.20" width="3.64" height="1.0" fill="#d4d4d4"/><rect x="930.24" y="227.20" width="0.61" height="1.0" fill="#d4d4d4"/><rect x="931.45" y="227.20" width="1.82" height="1.0" fill="#4ec9b0"/><rect x="933.27" y="227.20" width="0.61" height="1.0" fill="#d4d4d4"/><rect x="933.88" y="227.20" width="0.61" height="1.0" fill="#d4d4d4"/><rect x="934.49" y="227.20" width="3.64" height="1.0" fill="#4ec9b0"/><rect x="938.13" y="227.20" width="0.61" height="1.0" fill="#d4d4d4"/><rect x="938.74" y="227.20" width="0.61" height="1.0" fill="#d4d4d4"/><rect x="939.35" y="227.20" width="1.82" height="1.0" fill="#dcdcaa"/><rect x="941.17" y="227.20" width="0.61" height="1.0" fill="#da70d6"/><rect x="941.77" y="227.20" width="0.61" height="1.0" fill="#da70d6"/><rect x="942.38" y="227.20" width="0.61" height="1.0" fill="#d4d4d4"/><rect x="922.96" y="228.40" width="5.46" height="1.0" fill="#dcdcaa"/><rect x="928.42" y="228.40" width="0.61" height="1.0" fill="#da70d6"/><rect x="929.03" y="228.40" width="2.43" height="1.0" fill="#d4d4d4"/><rect x="931.45" y="228.40" width="0.61" height="1.0" fill="#d4d4d4"/><rect x="932.67" y="228.40" width="0.61" height="1.0" fill="#b5cea8"/><rect x="933.27" y="228.40" width="0.61" height="1.0" fill="#d4d4d4"/><rect x="934.49" y="228.40" width="1.21" height="1.0" fill="#d4d4d4"/><rect x="936.31" y="228.40" width="0.61" height="1.0" fill="#d4d4d4"/><rect x="937.52" y="228.40" width="0.61" height="1.0" fill="#b5cea8"/><rect x="938.13" y="228.40" width="0.61" height="1.0" fill="#da70d6"/><rect x="938.74" y="228.40" width="0.61" height="1.0" fill="#d4d4d4"/><rect x="922.96" y="229.60" width="2.43" height="1.0" fill="#569cd6"/><rect x="925.99" y="229.60" width="3.04" height="1.0" fill="#d4d4d4"/><rect x="929.63" y="229.60" width="0.61" height="1.0" fill="#d4d4d4"/><rect x="930.85" y="229.60" width="1.82" height="1.0" fill="#4ec9b0"/><rect x="932.67" y="229.60" width="0.61" height="1.0" fill="#d4d4d4"/><rect x="933.27" y="229.60" width="0.61" height="1.0" fill="#d4d4d4"/><rect x="933.88" y="229.60" width="3.64" height="1.0" fill="#4ec9b0"/><rect x="937.52" y="229.60" width="0.61" height="1.0" fill="#d4d4d4"/><rect x="938.13" y="229.60" width="0.61" height="1.0" fill="#d4d4d4"/><rect x="938.74" y="229.60" width="1.82" height="1.0" fill="#dcdcaa"/><rect x="940.56" y="229.60" width="0.61" height="1.0" fill="#da70d6"/><rect x="941.17" y="229.60" width="0.61" height="1.0" fill="#da70d6"/><rect x="941.77" y="229.60" width="0.61" height="1.0" fill="#d4d4d4"/><rect x="922.96" y="230.80" width="2.43" height="1.0" fill="#569cd6"/><rect x="925.99" y="230.80" width="2.43" height="1.0" fill="#d4d4d4"/><rect x="929.03" y="230.80" width="0.61" height="1.0" fill="#d4d4d4"/><rect x="930.24" y="230.80" width="1.82" height="1.0" fill="#4ec9b0"/><rect x="932.06" y="230.80" width="0.61" height="1.0" fill="#d4d4d4"/><rect x="932.67" y="230.80" width="0.61" height="1.0" fill="#d4d4d4"/><rect x="933.27" y="230.80" width="3.64" height="1.0" fill="#4ec9b0"/><rect x="936.92" y="230.80" width="0.61" height="1.0" fill="#d4d4d4"/><rect x="937.52" y="230.80" width="0.61" height="1.0" fill="#d4d4d4"/><rect x="938.13" y="230.80" width="2.43" height="1.0" fill="#dcdcaa"/><rect x="940.56" y="230.80" width="0.61" height="1.0" fill="#da70d6"/><rect x="941.17" y="230.80" width="0.61" height="1.0" fill="#d4d4d4"/><rect x="941.77" y="230.80" width="0.61" height="1.0" fill="#da70d6"/><rect x="942.38" y="230.80" width="0.61" height="1.0" fill="#d4d4d4"/><rect x="922.96" y="233.20" width="1.82" height="1.0" fill="#c586c0"/><rect x="925.38" y="233.20" width="0.61" height="1.0" fill="#da70d6"/><rect x="925.99" y="233.20" width="1.82" height="1.0" fill="#569cd6"/><rect x="928.42" y="233.20" width="0.61" height="1.0" fill="#d4d4d4"/><rect x="929.63" y="233.20" width="0.61" height="1.0" fill="#d4d4d4"/><rect x="930.85" y="233.20" width="0.61" height="1.0" fill="#b5cea8"/><rect x="931.45" y="233.20" width="0.61" height="1.0" fill="#d4d4d4"/><rect x="932.67" y="233.20" width="0.61" height="1.0" fill="#d4d4d4"/><rect x="933.88" y="233.20" width="0.61" height="1.0" fill="#d4d4d4"/><rect x="935.10" y="233.20" width="1.21" height="1.0" fill="#d4d4d4"/><rect x="936.92" y="233.20" width="0.61" height="1.0" fill="#d4d4d4"/><rect x="938.13" y="233.20" width="0.61" height="1.0" fill="#b5cea8"/><rect x="938.74" y="233.20" width="0.61" height="1.0" fill="#d4d4d4"/><rect x="939.95" y="233.20" width="0.61" height="1.0" fill="#d4d4d4"/><rect x="940.56" y="233.20" width="0.61" height="1.0" fill="#d4d4d4"/><rect x="941.17" y="233.20" width="0.61" height="1.0" fill="#d4d4d4"/><rect x="941.77" y="233.20" width="0.61" height="1.0" fill="#da70d6"/><rect x="942.99" y="233.20" width="0.61" height="1.0" fill="#da70d6"/><rect x="925.38" y="234.40" width="3.64" height="1.0" fill="#dcdcaa"/><rect x="929.03" y="234.40" width="0.61" height="1.0" fill="#da70d6"/><rect x="929.63" y="234.40" width="3.64" height="1.0" fill="#dcdcaa"/><rect x="933.27" y="234.40" width="0.61" height="1.0" fill="#da70d6"/><rect x="933.88" y="234.40" width="2.43" height="1.0" fill="#d4d4d4"/><rect x="936.31" y="234.40" width="0.61" height="1.0" fill="#da70d6"/><rect x="936.92" y="234.40" width="0.61" height="1.0" fill="#d4d4d4"/><rect x="937.52" y="234.40" width="0.61" height="1.0" fill="#da70d6"/><rect x="938.13" y="234.40" width="0.61" height="1.0" fill="#d4d4d4"/><rect x="939.35" y="234.40" width="2.43" height="1.0" fill="#d4d4d4"/><rect x="941.77" y="234.40" width="0.61" height="1.0" fill="#da70d6"/><rect x="942.38" y="234.40" width="0.61" height="1.0" fill="#d4d4d4"/><rect x="943.59" y="234.40" width="0.61" height="1.0" fill="#d4d4d4"/><rect x="944.81" y="234.40" width="0.61" height="1.0" fill="#b5cea8"/><rect x="945.41" y="234.40" width="0.61" height="1.0" fill="#da70d6"/><rect x="946.02" y="234.40" width="0.61" height="1.0" fill="#da70d6"/><rect x="947.24" y="234.40" width="0.61" height="1.0" fill="#d4d4d4"/><rect x="947.84" y="234.40" width="0.61" height="1.0" fill="#d4d4d4"/><rect x="949.06" y="234.40" width="0.61" height="1.0" fill="#b5cea8"/><rect x="949.66" y="234.40" width="0.61" height="1.0" fill="#da70d6"/><rect x="950.27" y="234.40" width="0.61" height="1.0" fill="#d4d4d4"/><rect x="925.38" y="235.60" width="1.21" height="1.0" fill="#c586c0"/><rect x="927.21" y="235.60" width="0.61" height="1.0" fill="#da70d6"/><rect x="927.81" y="235.60" width="0.61" height="1.0" fill="#d4d4d4"/><rect x="929.03" y="235.60" width="0.61" height="1.0" fill="#d4d4d4"/><rect x="930.24" y="235.60" width="0.61" height="1.0" fill="#b5cea8"/><rect x="930.85" y="235.60" width="0.61" height="1.0" fill="#da70d6"/><rect x="932.06" y="235.60" width="0.61" height="1.0" fill="#da70d6"/><rect x="927.81" y="236.80" width="3.64" height="1.0" fill="#dcdcaa"/><rect x="931.45" y="236.80" width="0.61" height="1.0" fill="#da70d6"/><rect x="932.06" y="236.80" width="2.43" height="1.0" fill="#d4d4d4"/><rect x="934.49" y="236.80" width="0.61" height="1.0" fill="#da70d6"/><rect x="935.10" y="236.80" width="0.61" height="1.0" fill="#d4d4d4"/><rect x="935.70" y="236.80" width="0.61" height="1.0" fill="#da70d6"/><rect x="936.31" y="236.80" width="0.61" height="1.0" fill="#da70d6"/><rect x="936.92" y="236.80" width="0.61" height="1.0" fill="#d4d4d4"/><rect x="925.38" y="238.00" width="0.61" height="1.0" fill="#da70d6"/><rect x="925.38" y="239.20" width="3.64" height="1.0" fill="#dcdcaa"/><rect x="929.03" y="239.20" width="0.61" height="1.0" fill="#da70d6"/><rect x="929.63" y="239.20" width="2.43" height="1.0" fill="#ce9178"/><rect x="932.06" y="239.20" width="0.61" height="1.0" fill="#d4d4d4"/><rect x="933.27" y="239.20" width="2.43" height="1.0" fill="#d4d4d4"/><rect x="935.70" y="239.20" width="0.61" height="1.0" fill="#da70d6"/><rect x="936.31" y="239.20" width="0.61" height="1.0" fill="#d4d4d4"/><rect x="936.92" y="239.20" width="0.61" height="1.0" fill="#da70d6"/><rect x="937.52" y="239.20" width="0.61" height="1.0" fill="#da70d6"/><rect x="938.13" y="239.20" width="0.61" height="1.0" fill="#d4d4d4"/><rect x="922.96" y="240.40" width="0.61" height="1.0" fill="#da70d6"/><rect x="922.96" y="242.80" width="1.21" height="1.0" fill="#c586c0"/><rect x="924.78" y="242.80" width="0.61" height="1.0" fill="#da70d6"/><rect x="925.38" y="242.80" width="1.21" height="1.0" fill="#d4d4d4"/><rect x="927.21" y="242.80" width="0.61" height="1.0" fill="#d4d4d4"/><rect x="928.42" y="242.80" width="0.61" height="1.0" fill="#b5cea8"/><rect x="929.03" y="242.80" width="0.61" height="1.0" fill="#da70d6"/><rect x="930.24" y="242.80" width="0.61" height="1.0" fill="#da70d6"/><rect x="925.38" y="244.00" width="3.64" height="1.0" fill="#dcdcaa"/><rect x="929.03" y="244.00" width="0.61" height="1.0" fill="#da70d6"/><rect x="929.63" y="244.00" width="2.43" height="1.0" fill="#ce9178"/><rect x="932.06" y="244.00" width="0.61" height="1.0" fill="#d4d4d4"/><rect x="933.27" y="244.00" width="2.43" height="1.0" fill="#d4d4d4"/><rect x="935.70" y="244.00" width="0.61" height="1.0" fill="#da70d6"/><rect x="936.31" y="244.00" width="0.61" height="1.0" fill="#b5cea8"/><rect x="936.92" y="244.00" width="0.61" height="1.0" fill="#da70d6"/><rect x="937.52" y="244.00" width="0.61" height="1.0" fill="#da70d6"/><rect x="938.13" y="244.00" width="0.61" height="1.0" fill="#d4d4d4"/><rect x="922.96" y="245.20" width="0.61" height="1.0" fill="#da70d6"/><rect x="922.96" y="247.60" width="1.82" height="1.0" fill="#4ec9b0"/><rect x="924.78" y="247.60" width="0.61" height="1.0" fill="#d4d4d4"/><rect x="925.38" y="247.60" width="0.61" height="1.0" fill="#d4d4d4"/><rect x="925.99" y="247.60" width="2.43" height="1.0" fill="#d4d4d4"/><rect x="929.03" y="247.60" width="0.61" height="1.0" fill="#d4d4d4"/><rect x="929.63" y="247.60" width="0.61" height="1.0" fill="#d4d4d4"/><rect x="930.85" y="247.60" width="3.04" height="1.0" fill="#ce9178"/><rect x="934.49" y="247.60" width="0.61" height="1.0" fill="#ce9178"/><rect x="935.70" y="247.60" width="3.04" height="1.0" fill="#ce9178"/><rect x="939.35" y="247.60" width="0.61" height="1.0" fill="#ce9178"/><rect x="940.56" y="247.60" width="0.61" height="1.0" fill="#d4d4d4"/><rect x="941.17" y="247.60" width="0.61" height="1.0" fill="#d4d4d4"/><rect x="942.38" y="247.60" width="1.82" height="1.0" fill="#4ec9b0"/><rect x="944.20" y="247.60" width="0.61" height="1.0" fill="#d4d4d4"/><rect x="944.81" y="247.60" width="0.61" height="1.0" fill="#d4d4d4"/><rect x="945.41" y="247.60" width="3.64" height="1.0" fill="#4ec9b0"/><rect x="949.06" y="247.60" width="0.61" height="1.0" fill="#d4d4d4"/><rect x="949.66" y="247.60" width="0.61" height="1.0" fill="#d4d4d4"/><rect x="950.27" y="247.60" width="7.89" height="1.0" fill="#d4d4d4"/><rect x="958.16" y="247.60" width="0.61" height="1.0" fill="#d4d4d4"/><rect x="958.77" y="247.60" width="1.82" height="1.0" fill="#4ec9b0"/><rect x="960.59" y="247.60" width="0.61" height="1.0" fill="#d4d4d4"/><rect x="961.20" y="247.60" width="0.61" height="1.0" fill="#d4d4d4"/><rect x="961.80" y="247.60" width="3.64" height="1.0" fill="#4ec9b0"/><rect x="965.45" y="247.60" width="0.61" height="1.0" fill="#d4d4d4"/><rect x="966.05" y="247.60" width="0.61" height="1.0" fill="#d4d4d4"/><rect x="966.66" y="247.60" width="7.28" height="1.0" fill="#d4d4d4"/><rect x="973.94" y="247.60" width="0.61" height="1.0" fill="#d4d4d4"/><rect x="974.55" y="247.60" width="0.61" height="1.0" fill="#da70d6"/><rect x="975.16" y="247.60" width="3.04" height="1.0" fill="#d4d4d4"/><rect x="929.03" y="248.80" width="0.61" height="1.0" fill="#d4d4d4"/><rect x="929.63" y="248.80" width="0.61" height="1.0" fill="#d4d4d4"/><rect x="930.85" y="248.80" width="0.61" height="1.0" fill="#ce9178"/><rect x="932.06" y="248.80" width="7.89" height="1.0" fill="#ce9178"/><rect x="940.56" y="248.80" width="0.61" height="1.0" fill="#d4d4d4"/><rect x="941.17" y="248.80" width="0.61" height="1.0" fill="#d4d4d4"/><rect x="942.38" y="248.80" width="1.82" height="1.0" fill="#4ec9b0"/><rect x="944.20" y="248.80" width="0.61" height="1.0" fill="#d4d4d4"/><rect x="944.81" y="248.80" width="0.61" height="1.0" fill="#d4d4d4"/><rect x="945.41" y="248.80" width="2.43" height="1.0" fill="#d4d4d4"/><rect x="947.84" y="248.80" width="0.61" height="1.0" fill="#d4d4d4"/><rect x="949.06" y="248.80" width="1.82" height="1.0" fill="#4ec9b0"/><rect x="950.88" y="248.80" width="0.61" height="1.0" fill="#d4d4d4"/><rect x="951.49" y="248.80" width="0.61" height="1.0" fill="#d4d4d4"/><rect x="952.09" y="248.80" width="2.43" height="1.0" fill="#d4d4d4"/><rect x="955.13" y="248.80" width="0.61" height="1.0" fill="#d4d4d4"/><rect x="955.73" y="248.80" width="0.61" height="1.0" fill="#d4d4d4"/><rect x="956.95" y="248.80" width="1.82" height="1.0" fill="#4ec9b0"/><rect x="958.77" y="248.80" width="0.61" height="1.0" fill="#d4d4d4"/><rect x="959.38" y="248.80" width="0.61" height="1.0" fill="#d4d4d4"/><rect x="959.98" y="248.80" width="3.04" height="1.0" fill="#d4d4d4"/><rect x="963.02" y="248.80" width="0.61" height="1.0" fill="#d4d4d4"/><rect x="964.23" y="248.80" width="1.82" height="1.0" fill="#4ec9b0"/><rect x="966.05" y="248.80" width="0.61" height="1.0" fill="#d4d4d4"/><rect x="966.66" y="248.80" width="0.61" height="1.0" fill="#d4d4d4"/><rect x="967.27" y="248.80" width="2.43" height="1.0" fill="#d4d4d4"/><rect x="969.70" y="248.80" width="0.61" height="1.0" fill="#d4d4d4"/><rect x="970.30" y="248.80" width="3.04" height="1.0" fill="#dcdcaa"/><rect x="973.34" y="248.80" width="0.61" height="1.0" fill="#da70d6"/><rect x="973.94" y="248.80" width="0.61" height="1.0" fill="#da70d6"/><rect x="974.55" y="248.80" width="0.61" height="1.0" fill="#d4d4d4"/><rect x="920.53" y="250.00" width="0.61" height="1.0" fill="#da70d6"/><rect x="920.53" y="251.20" width="0.61" height="1.0" fill="#da70d6"/><rect x="922.96" y="252.40" width="1.21" height="1.0" fill="#6a9955"/><rect x="924.78" y="252.40" width="2.43" height="1.0" fill="#6a9955"/><rect x="927.81" y="252.40" width="1.21" height="1.0" fill="#6a9955"/><rect x="929.63" y="252.40" width="2.43" height="1.0" fill="#6a9955"/><rect x="932.67" y="252.40" width="1.21" height="1.0" fill="#6a9955"/><rect x="934.49" y="252.40" width="3.04" height="1.0" fill="#6a9955"/><rect x="938.13" y="252.40" width="1.21" height="1.0" fill="#6a9955"/><rect x="939.95" y="252.40" width="4.25" height="1.0" fill="#6a9955"/><rect x="944.81" y="252.40" width="1.21" height="1.0" fill="#6a9955"/><rect x="946.63" y="252.40" width="7.28" height="1.0" fill="#6a9955"/><rect x="954.52" y="252.40" width="3.04" height="1.0" fill="#6a9955"/><rect x="922.96" y="254.80" width="3.04" height="1.0" fill="#569cd6"/><rect x="926.60" y="254.80" width="2.43" height="1.0" fill="#569cd6"/><rect x="929.03" y="254.80" width="0.61" height="1.0" fill="#d4d4d4"/><rect x="930.24" y="254.80" width="2.43" height="1.0" fill="#d4d4d4"/><rect x="932.67" y="254.80" width="0.61" height="1.0" fill="#da70d6"/><rect x="933.27" y="254.80" width="0.61" height="1.0" fill="#da70d6"/><rect x="934.49" y="254.80" width="0.61" height="1.0" fill="#d4d4d4"/><rect x="935.70" y="254.80" width="0.61" height="1.0" fill="#da70d6"/><rect x="936.31" y="254.80" width="4.86" height="1.0" fill="#ce9178"/><rect x="941.17" y="254.80" width="0.61" height="1.0" fill="#d4d4d4"/><rect x="942.38" y="254.80" width="4.25" height="1.0" fill="#ce9178"/><rect x="946.63" y="254.80" width="0.61" height="1.0" fill="#d4d4d4"/><rect x="947.84" y="254.80" width="4.86" height="1.0" fill="#ce9178"/><rect x="952.70" y="254.80" width="0.61" height="1.0" fill="#d4d4d4"/><rect x="953.91" y="254.80" width="3.64" height="1.0" fill="#ce9178"/><rect x="957.56" y="254.80" width="0.61" height="1.0" fill="#d4d4d4"/><rect x="958.77" y="254.80" width="3.04" height="1.0" fill="#ce9178"/><rect x="961.80" y="254.80" width="0.61" height="1.0" fill="#da70d6"/><rect x="962.41" y="254.80" width="0.61" height="1.0" fill="#d4d4d4"/><rect x="922.96" y="257.20" width="1.82" height="1.0" fill="#569cd6"/><rect x="925.38" y="257.20" width="1.21" height="1.0" fill="#d4d4d4"/><rect x="927.21" y="257.20" width="0.61" height="1.0" fill="#d4d4d4"/><rect x="928.42" y="257.20" width="3.64" height="1.0" fill="#569cd6"/><rect x="932.06" y="257.20" width="0.61" height="1.0" fill="#da70d6"/><rect x="932.67" y="257.20" width="2.43" height="1.0" fill="#d4d4d4"/><rect x="935.10" y="257.20" width="0.61" height="1.0" fill="#da70d6"/><rect x="936.31" y="257.20" width="0.61" height="1.0" fill="#d4d4d4"/><rect x="937.52" y="257.20" width="3.64" height="1.0" fill="#569cd6"/><rect x="941.17" y="257.20" width="0.61" height="1.0" fill="#da70d6"/><rect x="941.77" y="257.20" width="2.43" height="1.0" fill="#d4d4d4"/><rect x="944.20" y="257.20" width="0.61" height="1.0" fill="#da70d6"/><rect x="944.81" y="257.20" width="0.61" height="1.0" fill="#b5cea8"/><rect x="945.41" y="257.20" width="0.61" height="1.0" fill="#da70d6"/><rect x="946.02" y="257.20" width="0.61" height="1.0" fill="#da70d6"/><rect x="946.63" y="257.20" width="0.61" height="1.0" fill="#d4d4d4"/><rect x="922.96" y="258.40" width="2.43" height="1.0" fill="#569cd6"/><rect x="925.99" y="258.40" width="3.64" height="1.0" fill="#d4d4d4"/><rect x="930.24" y="258.40" width="0.61" height="1.0" fill="#d4d4d4"/><rect x="931.45" y="258.40" width="1.82" height="1.0" fill="#4ec9b0"/><rect x="933.27" y="258.40" width="0.61" height="1.0" fill="#d4d4d4"/><rect x="933.88" y="258.40" width="0.61" height="1.0" fill="#d4d4d4"/><rect x="934.49" y="258.40" width="3.64" height="1.0" fill="#4ec9b0"/><rect x="938.13" y="258.40" width="0.61" height="1.0" fill="#d4d4d4"/><rect x="938.74" y="258.40" width="0.61" height="1.0" fill="#d4d4d4"/><rect x="939.35" y="258.40" width="1.82" height="1.0" fill="#dcdcaa"/><rect x="941.17" y="258.40" width="0.61" height="1.0" fill="#da70d6"/><rect x="941.77" y="258.40" width="0.61" height="1.0" fill="#da70d6"/><rect x="942.38" y="258.40" width="0.61" height="1.0" fill="#d4d4d4"/><rect x="922.96" y="259.60" width="5.46" height="1.0" fill="#dcdcaa"/><rect x="928.42" y="259.60" width="0.61" height="1.0" fill="#da70d6"/><rect x="929.03" y="259.60" width="2.43" height="1.0" fill="#d4d4d4"/><rect x="931.45" y="259.60" width="0.61" height="1.0" fill="#d4d4d4"/><rect x="932.67" y="259.60" width="0.61" height="1.0" fill="#b5cea8"/><rect x="933.27" y="259.60" width="0.61" height="1.0" fill="#d4d4d4"/><rect x="934.49" y="259.60" width="1.21" height="1.0" fill="#d4d4d4"/><rect x="936.31" y="259.60" width="0.61" height="1.0" fill="#d4d4d4"/><rect x="937.52" y="259.60" width="0.61" height="1.0" fill="#b5cea8"/><rect x="938.13" y="259.60" width="0.61" height="1.0" fill="#da70d6"/><rect x="938.74" y="259.60" width="0.61" height="1.0" fill="#d4d4d4"/><rect x="922.96" y="260.80" width="2.43" height="1.0" fill="#569cd6"/><rect x="925.99" y="260.80" width="3.04" height="1.0" fill="#d4d4d4"/><rect x="929.63" y="260.80" width="0.61" height="1.0" fill="#d4d4d4"/><rect x="930.85" y="260.80" width="1.82" height="1.0" fill="#4ec9b0"/><rect x="932.67" y="260.80" width="0.61" height="1.0" fill="#d4d4d4"/><rect x="933.27" y="260.80" width="0.61" height="1.0" fill="#d4d4d4"/><rect x="933.88" y="260.80" width="3.64" height="1.0" fill="#4ec9b0"/><rect x="937.52" y="260.80" width="0.61" height="1.0" fill="#d4d4d4"/><rect x="938.13" y="260.80" width="0.61" height="1.0" fill="#d4d4d4"/><rect x="938.74" y="260.80" width="1.82" height="1.0" fill="#dcdcaa"/><rect x="940.56" y="260.80" width="0.61" height="1.0" fill="#da70d6"/><rect x="941.17" y="260.80" width="0.61" height="1.0" fill="#da70d6"/><rect x="941.77" y="260.80" width="0.61" height="1.0" fill="#d4d4d4"/><rect x="922.96" y="262.00" width="2.43" height="1.0" fill="#569cd6"/><rect x="925.99" y="262.00" width="2.43" height="1.0" fill="#d4d4d4"/><rect x="929.03" y="262.00" width="0.61" height="1.0" fill="#d4d4d4"/><rect x="930.24" y="262.00" width="1.82" height="1.0" fill="#4ec9b0"/><rect x="932.06" y="262.00" width="0.61" height="1.0" fill="#d4d4d4"/><rect x="932.67" y="262.00" width="0.61" height="1.0" fill="#d4d4d4"/><rect x="933.27" y="262.00" width="3.64" height="1.0" fill="#4ec9b0"/><rect x="936.92" y="262.00" width="0.61" height="1.0" fill="#d4d4d4"/><rect x="937.52" y="262.00" width="0.61" height="1.0" fill="#d4d4d4"/><rect x="938.13" y="262.00" width="2.43" height="1.0" fill="#dcdcaa"/><rect x="940.56" y="262.00" width="0.61" height="1.0" fill="#da70d6"/><rect x="941.17" y="262.00" width="0.61" height="1.0" fill="#d4d4d4"/><rect x="941.77" y="262.00" width="0.61" height="1.0" fill="#da70d6"/><rect x="942.38" y="262.00" width="0.61" height="1.0" fill="#d4d4d4"/><rect x="922.96" y="264.40" width="1.82" height="1.0" fill="#c586c0"/><rect x="925.38" y="264.40" width="0.61" height="1.0" fill="#da70d6"/><rect x="925.99" y="264.40" width="1.82" height="1.0" fill="#569cd6"/><rect x="928.42" y="264.40" width="0.61" height="1.0" fill="#d4d4d4"/><rect x="929.63" y="264.40" width="0.61" height="1.0" fill="#d4d4d4"/><rect x="930.85" y="264.40" width="0.61" height="1.0" fill="#b5cea8"/><rect x="931.45" y="264.40" width="0.61" height="1.0" fill="#d4d4d4"/><rect x="932.67" y="264.40" width="0.61" height="1.0" fill="#d4d4d4"/><rect x="933.88" y="264.40" width="0.61" height="1.0" fill="#d4d4d4"/><rect x="935.10" y="264.40" width="1.21" height="1.0" fill="#d4d4d4"/><rect x="936.92" y="264.40" width="0.61" height="1.0" fill="#d4d4d4"/><rect x="938.13" y="264.40" width="0.61" height="1.0" fill="#b5cea8"/><rect x="938.74" y="264.40" width="0.61" height="1.0" fill="#d4d4d4"/><rect x="939.95" y="264.40" width="0.61" height="1.0" fill="#d4d4d4"/><rect x="940.56" y="264.40" width="0.61" height="1.0" fill="#d4d4d4"/><rect x="941.17" y="264.40" width="0.61" height="1.0" fill="#d4d4d4"/><rect x="941.77" y="264.40" width="0.61" height="1.0" fill="#da70d6"/><rect x="942.99" y="264.40" width="0.61" height="1.0" fill="#da70d6"/><rect x="925.38" y="265.60" width="3.64" height="1.0" fill="#dcdcaa"/><rect x="929.03" y="265.60" width="0.61" height="1.0" fill="#da70d6"/><rect x="929.63" y="265.60" width="3.64" height="1.0" fill="#dcdcaa"/><rect x="933.27" y="265.60" width="0.61" height="1.0" fill="#da70d6"/><rect x="933.88" y="265.60" width="2.43" height="1.0" fill="#d4d4d4"/><rect x="936.31" y="265.60" width="0.61" height="1.0" fill="#da70d6"/><rect x="936.92" y="265.60" width="0.61" height="1.0" fill="#d4d4d4"/><rect x="937.52" y="265.60" width="0.61" height="1.0" fill="#da70d6"/><rect x="938.13" y="265.60" width="0.61" height="1.0" fill="#d4d4d4"/><rect x="939.35" y="265.60" width="2.43" height="1.0" fill="#d4d4d4"/><rect x="941.77" y="265.60" width="0.61" height="1.0" fill="#da70d6"/><rect x="942.38" y="265.60" width="0.61" height="1.0" fill="#d4d4d4"/><rect x="943.59" y="265.60" width="0.61" height="1.0" fill="#d4d4d4"/><rect x="944.81" y="265.60" width="0.61" height="1.0" fill="#b5cea8"/><rect x="945.41" y="265.60" width="0.61" height="1.0" fill="#da70d6"/><rect x="946.02" y="265.60" width="0.61" height="1.0" fill="#da70d6"/><rect x="947.24" y="265.60" width="0.61" height="1.0" fill="#d4d4d4"/><rect x="947.84" y="265.60" width="0.61" height="1.0" fill="#d4d4d4"/><rect x="949.06" y="265.60" width="0.61" height="1.0" fill="#b5cea8"/><rect x="949.66" y="265.60" width="0.61" height="1.0" fill="#da70d6"/><rect x="950.27" y="265.60" width="0.61" height="1.0" fill="#d4d4d4"/><rect x="925.38" y="266.80" width="3.64" height="1.0" fill="#dcdcaa"/><rect x="929.03" y="266.80" width="0.61" height="1.0" fill="#da70d6"/><rect x="929.63" y="266.80" width="2.43" height="1.0" fill="#ce9178"/><rect x="932.06" y="266.80" width="0.61" height="1.0" fill="#d4d4d4"/><rect x="933.27" y="266.80" width="2.43" height="1.0" fill="#d4d4d4"/><rect x="935.70" y="266.80" width="0.61" height="1.0" fill="#da70d6"/><rect x="936.31" y="266.80" width="0.61" height="1.0" fill="#d4d4d4"/><rect x="936.92" y="266.80" width="0.61" height="1.0" fill="#da70d6"/><rect x="937.52" y="266.80" width="0.61" height="1.0" fill="#da70d6"/><rect x="938.13" y="266.80" width="0.61" height="1.0" fill="#d4d4d4"/><rect x="922.96" y="268.00" width="0.61" height="1.0" fill="#da70d6"/><rect x="922.96" y="270.40" width="1.21" height="1.0" fill="#c586c0"/><rect x="924.78" y="270.40" width="0.61" height="1.0" fill="#da70d6"/><rect x="925.38" y="270.40" width="1.21" height="1.0" fill="#d4d4d4"/><rect x="927.21" y="270.40" width="0.61" height="1.0" fill="#d4d4d4"/><rect x="928.42" y="270.40" width="0.61" height="1.0" fill="#b5cea8"/><rect x="929.03" y="270.40" width="0.61" height="1.0" fill="#da70d6"/><rect x="930.24" y="270.40" width="0.61" height="1.0" fill="#da70d6"/><rect x="925.38" y="271.60" width="3.64" height="1.0" fill="#dcdcaa"/><rect x="929.03" y="271.60" width="0.61" height="1.0" fill="#da70d6"/><rect x="929.63" y="271.60" width="2.43" height="1.0" fill="#ce9178"/><rect x="932.06" y="271.60" width="0.61" height="1.0" fill="#d4d4d4"/><rect x="933.27" y="271.60" width="2.43" height="1.0" fill="#d4d4d4"/><rect x="935.70" y="271.60" width="0.61" height="1.0" fill="#da70d6"/><rect x="936.31" y="271.60" width="0.61" height="1.0" fill="#b5cea8"/><rect x="936.92" y="271.60" width="0.61" height="1.0" fill="#da70d6"/><rect x="937.52" y="271.60" width="0.61" height="1.0" fill="#da70d6"/><rect x="938.13" y="271.60" width="0.61" height="1.0" fill="#d4d4d4"/><rect x="922.96" y="272.80" width="0.61" height="1.0" fill="#da70d6"/><rect x="922.96" y="275.20" width="1.82" height="1.0" fill="#4ec9b0"/><rect x="924.78" y="275.20" width="0.61" height="1.0" fill="#d4d4d4"/><rect x="925.38" y="275.20" width="0.61" height="1.0" fill="#d4d4d4"/><rect x="925.99" y="275.20" width="2.43" height="1.0" fill="#d4d4d4"/><rect x="929.03" y="275.20" width="0.61" height="1.0" fill="#d4d4d4"/><rect x="929.63" y="275.20" width="0.61" height="1.0" fill="#d4d4d4"/><rect x="930.85" y="275.20" width="3.04" height="1.0" fill="#ce9178"/><rect x="934.49" y="275.20" width="0.61" height="1.0" fill="#ce9178"/><rect x="935.70" y="275.20" width="3.04" height="1.0" fill="#ce9178"/><rect x="939.35" y="275.20" width="0.61" height="1.0" fill="#ce9178"/><rect x="940.56" y="275.20" width="0.61" height="1.0" fill="#d4d4d4"/><rect x="941.17" y="275.20" width="0.61" height="1.0" fill="#d4d4d4"/><rect x="942.38" y="275.20" width="1.82" height="1.0" fill="#4ec9b0"/><rect x="944.20" y="275.20" width="0.61" height="1.0" fill="#d4d4d4"/><rect x="944.81" y="275.20" width="0.61" height="1.0" fill="#d4d4d4"/><rect x="945.41" y="275.20" width="3.64" height="1.0" fill="#4ec9b0"/><rect x="949.06" y="275.20" width="0.61" height="1.0" fill="#d4d4d4"/><rect x="949.66" y="275.20" width="0.61" height="1.0" fill="#d4d4d4"/><rect x="950.27" y="275.20" width="7.89" height="1.0" fill="#d4d4d4"/><rect x="958.16" y="275.20" width="0.61" height="1.0" fill="#d4d4d4"/><rect x="958.77" y="275.20" width="1.82" height="1.0" fill="#4ec9b0"/><rect x="960.59" y="275.20" width="0.61" height="1.0" fill="#d4d4d4"/><rect x="961.20" y="275.20" width="0.61" height="1.0" fill="#d4d4d4"/><rect x="961.80" y="275.20" width="3.64" height="1.0" fill="#4ec9b0"/><rect x="965.45" y="275.20" width="0.61" height="1.0" fill="#d4d4d4"/><rect x="966.05" y="275.20" width="0.61" height="1.0" fill="#d4d4d4"/><rect x="966.66" y="275.20" width="7.28" height="1.0" fill="#d4d4d4"/><rect x="973.94" y="275.20" width="0.61" height="1.0" fill="#d4d4d4"/><rect x="974.55" y="275.20" width="0.61" height="1.0" fill="#da70d6"/><rect x="975.16" y="275.20" width="3.04" height="1.0" fill="#d4d4d4"/><rect x="929.03" y="276.40" width="0.61" height="1.0" fill="#d4d4d4"/><rect x="929.63" y="276.40" width="0.61" height="1.0" fill="#d4d4d4"/><rect x="930.85" y="276.40" width="0.61" height="1.0" fill="#ce9178"/><rect x="932.06" y="276.40" width="7.89" height="1.0" fill="#ce9178"/><rect x="940.56" y="276.40" width="0.61" height="1.0" fill="#d4d4d4"/><rect x="941.17" y="276.40" width="0.61" height="1.0" fill="#d4d4d4"/><rect x="942.38" y="276.40" width="1.82" height="1.0" fill="#4ec9b0"/><rect x="944.20" y="276.40" width="0.61" height="1.0" fill="#d4d4d4"/><rect x="944.81" y="276.40" width="0.61" height="1.0" fill="#d4d4d4"/><rect x="945.41" y="276.40" width="2.43" height="1.0" fill="#d4d4d4"/><rect x="947.84" y="276.40" width="0.61" height="1.0" fill="#d4d4d4"/><rect x="949.06" y="276.40" width="1.82" height="1.0" fill="#4ec9b0"/><rect x="950.88" y="276.40" width="0.61" height="1.0" fill="#d4d4d4"/><rect x="951.49" y="276.40" width="0.61" height="1.0" fill="#d4d4d4"/><rect x="952.09" y="276.40" width="2.43" height="1.0" fill="#d4d4d4"/><rect x="955.13" y="276.40" width="0.61" height="1.0" fill="#d4d4d4"/><rect x="955.73" y="276.40" width="0.61" height="1.0" fill="#d4d4d4"/><rect x="956.95" y="276.40" width="1.82" height="1.0" fill="#4ec9b0"/><rect x="958.77" y="276.40" width="0.61" height="1.0" fill="#d4d4d4"/><rect x="959.38" y="276.40" width="0.61" height="1.0" fill="#d4d4d4"/><rect x="959.98" y="276.40" width="3.04" height="1.0" fill="#d4d4d4"/><rect x="963.02" y="276.40" width="0.61" height="1.0" fill="#d4d4d4"/><rect x="964.23" y="276.40" width="1.82" height="1.0" fill="#4ec9b0"/><rect x="966.05" y="276.40" width="0.61" height="1.0" fill="#d4d4d4"/><rect x="966.66" y="276.40" width="0.61" height="1.0" fill="#d4d4d4"/><rect x="967.27" y="276.40" width="2.43" height="1.0" fill="#d4d4d4"/><rect x="969.70" y="276.40" width="0.61" height="1.0" fill="#d4d4d4"/><rect x="970.30" y="276.40" width="3.04" height="1.0" fill="#dcdcaa"/><rect x="973.34" y="276.40" width="0.61" height="1.0" fill="#da70d6"/><rect x="973.94" y="276.40" width="0.61" height="1.0" fill="#da70d6"/><rect x="974.55" y="276.40" width="0.61" height="1.0" fill="#d4d4d4"/><rect x="920.53" y="277.60" width="0.61" height="1.0" fill="#da70d6"/><rect x="920.53" y="280.00" width="1.82" height="1.0" fill="#4ec9b0"/><rect x="922.35" y="280.00" width="0.61" height="1.0" fill="#d4d4d4"/><rect x="922.96" y="280.00" width="0.61" height="1.0" fill="#d4d4d4"/><rect x="923.56" y="280.00" width="2.43" height="1.0" fill="#d4d4d4"/><rect x="926.60" y="280.00" width="0.61" height="1.0" fill="#d4d4d4"/><rect x="927.21" y="280.00" width="0.61" height="1.0" fill="#d4d4d4"/><rect x="928.42" y="280.00" width="2.43" height="1.0" fill="#ce9178"/><rect x="931.45" y="280.00" width="3.04" height="1.0" fill="#ce9178"/><rect x="935.10" y="280.00" width="4.86" height="1.0" fill="#ce9178"/><rect x="940.56" y="280.00" width="0.61" height="1.0" fill="#d4d4d4"/><rect x="941.17" y="280.00" width="0.61" height="1.0" fill="#d4d4d4"/><rect x="942.38" y="280.00" width="1.82" height="1.0" fill="#4ec9b0"/><rect x="944.20" y="280.00" width="0.61" height="1.0" fill="#d4d4d4"/><rect x="944.81" y="280.00" width="0.61" height="1.0" fill="#d4d4d4"/><rect x="945.41" y="280.00" width="2.43" height="1.0" fill="#d4d4d4"/><rect x="947.84" y="280.00" width="0.61" height="1.0" fill="#d4d4d4"/><rect x="918.10" y="281.20" width="0.61" height="1.0" fill="#da70d6"/><rect x="918.10" y="283.60" width="0.61" height="1.0" fill="#da70d6"/><rect x="920.53" y="284.80" width="3.64" height="1.0" fill="#c586c0"/><rect x="924.78" y="284.80" width="0.61" height="1.0" fill="#b5cea8"/><rect x="925.38" y="284.80" width="0.61" height="1.0" fill="#d4d4d4"/><rect x="920.53" y="286.00" width="1.21" height="1.0" fill="#6a9955"/><rect x="918.10" y="287.20" width="0.61" height="1.0" fill="#da70d6"/></g></svg>
<div class="a" style="left:420px;top:539px;width:57px;height:1.5px;background:#a0a0a0;"></div>
<svg width="1" height="1"><path d="M251.9 545.2L255.9 552.2H247.9Z" fill="none" stroke="#c5c5c5" stroke-width="0.8" stroke-linejoin="round"/><path d="M251.9 547.4V549.9M251.9 550.9V551.3" stroke="#c5c5c5" stroke-width="0.7"/></svg>
<div class="t" style="left:261.6px;top:544.5px;font-size:8px;line-height:10px;color:#969696;">Problems</div>
<svg width="1" height="1"><rect x="317.2" y="545.5" width="8.6" height="8.2" rx="1" fill="none" stroke="#c5c5c5" stroke-width="0.8"/><path d="M319.1 547.8L320.9 549.5L319.1 551.2M321.5 551.6H323.6" fill="none" stroke="#c5c5c5" stroke-width="0.7"/></svg>
<div class="t" style="left:330.6px;top:544.5px;font-size:8px;line-height:10px;color:#969696;">zsh</div>
<div class="t" style="left:365px;top:544.5px;font-size:8px;line-height:10px;color:#969696;">Task: Build</div>
<div class="t" style="left:426px;top:544.5px;font-size:8px;line-height:10px;color:#e7e7e7;">Task: Run</div>
<svg width="1" height="1"><path d="M467.4 547.4L471.4 551.4M471.4 547.4L467.4 551.4" stroke="#c5c5c5" stroke-width="0.8"/></svg>
<svg width="1" height="1"><rect x="963.1" y="545.4" width="7.8" height="7.2" rx="0.3" fill="none" stroke="#c5c5c5" stroke-width="0.85"/><path d="M966.8 545.4V552.6" stroke="#c5c5c5" stroke-width="0.85"/><rect x="978.1" y="545.4" width="8.2" height="7.2" rx="0.3" fill="none" stroke="#c5c5c5" stroke-width="0.85"/><path d="M978.1 546.6H986.3" stroke="#c5c5c5" stroke-width="0.85"/></svg>
<div class="t m" style="left:245.8px;top:562.10px;font-size:8.5px;line-height:8.4px;transform:scaleX(0.9608);transform-origin:0 0;color:#dcdcdc;font-weight:bold">&gt; Executing task: /bin/zsh -c ./build/Release/outRelease &lt;</div>
<div class="t m" style="left:245.8px;top:587.30px;font-size:8.5px;line-height:8.4px;transform:scaleX(0.9608);transform-origin:0 0;color:#dcdcdc;font-weight:bold">Terminal will be reused by tasks.</div>
<div class="t m" style="left:245.8px;top:604.10px;font-size:8.5px;line-height:8.4px;transform:scaleX(0.9608);transform-origin:0 0;color:#c8c8c8">Test 1 took: 1976 microseconds</div>
<div class="t m" style="left:245.8px;top:612.50px;font-size:8.5px;line-height:8.4px;transform:scaleX(0.9608);transform-origin:0 0;color:#c8c8c8">Test 2 took: 1935 microseconds</div>
<div class="t m" style="left:245.8px;top:620.90px;font-size:8.5px;line-height:8.4px;transform:scaleX(0.9608);transform-origin:0 0;color:#c8c8c8">Test 3 took: 420 microseconds</div>
<div class="t m" style="left:245.8px;top:629.30px;font-size:8.5px;line-height:8.4px;transform:scaleX(0.9608);transform-origin:0 0;color:#c8c8c8">Test 4 took: 298 microseconds</div>
<div class="t m" style="left:245.8px;top:637.70px;font-size:8.5px;line-height:8.4px;transform:scaleX(0.9608);transform-origin:0 0;color:#c8c8c8">Test 5 took: 1985 microseconds</div>
<div class="t m" style="left:245.8px;top:646.10px;font-size:8.5px;line-height:8.4px;transform:scaleX(0.9608);transform-origin:0 0;color:#c8c8c8">All tests passed!</div>
<div class="a" style="left:246px;top:653.2px;width:4.8px;height:8.8px;background:transparent;border:0.9px solid #a8a8a8"></div>
<svg width="1" height="1"><path d="M1002.2 61.1L1006.1 57.6L1008.2 59.9L1004.3 63.4Z" fill="none" stroke="#c5c5c5" stroke-width="0.85" stroke-linejoin="round"/><path d="M1011.4 62.8L1013.2 61L1015 62.8L1013.2 64.6Z M1010.3 67.8L1012.1 66L1013.9 67.8L1012.1 69.6Z" fill="none" stroke="#c5c5c5" stroke-width="0.85" stroke-linejoin="round"/><path d="M1006.3 62V67.8H1010.3M1007.2 62.8H1011.4" fill="none" stroke="#c5c5c5" stroke-width="0.85"/></svg>
<svg width="1" height="1"><path d="M1008.40 102.40L1002.25 98.85L1002.25 91.75L1008.40 88.20L1014.55 91.75L1014.55 98.85Z" fill="none" stroke="#c5c5c5" stroke-width="0.8"/></svg>
<div class="t" style="left:1004.1px;top:90.4px;font-size:7.6px;line-height:10px;color:#c5c5c5;">0x</div>
<svg width="1" height="1"><path d="M7.4 692.6L9.8 695L7.4 697.4M12.9 691.4L10.5 693.8L12.9 696.2" fill="none" stroke="#ffffff" stroke-width="0.8"/></svg>
<svg width="1" height="1"><path d="M30.2 694.2V692.3H27.9L27.1 691.2H23.9V697.8H28.2" fill="none" stroke="#ffffff" stroke-width="0.8"/><circle cx="30.6" cy="697" r="2.1" fill="#ffffff"/><path d="M29.6 697.1L30.4 697.8L31.6 696.3" fill="none" stroke="#007acc" stroke-width="0.6"/></svg>
<div class="t" style="left:34.4px;top:690.9px;font-size:7.4px;line-height:10px;color:#ffffff;letter-spacing:-0.05px">Code/Tabnine</div>
<svg width="1" height="1"><path d="M89 691.4L95.6 698M95.4 691.2L89.2 697.8" stroke="#ffffff" stroke-width="1"/><path d="M88.4 692.4L89.9 690.9M94.6 690.6L96.2 692.2M88.6 698L89.8 696.8" stroke="#ffffff" stroke-width="1.1"/></svg>
<div class="t" style="left:98.8px;top:690.9px;font-size:7.4px;line-height:10px;color:#ffffff;letter-spacing:-0.05px">Release</div>
<svg width="1" height="1"><path d="M139.40 694.80L139.33 695.50L138.29 695.83L138.04 696.30L138.35 697.35L137.80 697.79L136.83 697.29L136.33 697.45L135.80 698.40L135.10 698.33L134.77 697.29L134.30 697.04L133.25 697.35L132.81 696.80L133.31 695.83L133.15 695.33L132.20 694.80L132.27 694.10L133.31 693.77L133.56 693.30L133.25 692.25L133.80 691.81L134.77 692.31L135.27 692.15L135.80 691.20L136.50 691.27L136.83 692.31L137.30 692.56L138.35 692.25L138.79 692.80L138.29 693.77L138.45 694.27Z" fill="none" stroke="#ffffff" stroke-width="0.8" stroke-linejoin="round"/><circle cx="135.8" cy="694.8" r="1.1" fill="none" stroke="#ffffff" stroke-width="0.7"/><path d="M148.6 691.4L153.8 694.8L148.6 698.2Z" fill="none" stroke="#ffffff" stroke-width="0.8" stroke-linejoin="round"/><path d="M163.6 692.2H170M165.6 692.2V691.1H168V692.2M164.3 692.2L164.8 698.3H168.8L169.3 692.2M165.9 693.6V697M167.7 693.6V697" fill="none" stroke="#ffffff" stroke-width="0.8"/><ellipse cx="182.6" cy="695.2" rx="2.2" ry="2.9" fill="none" stroke="#ffffff" stroke-width="0.8"/><path d="M180.4 693.8H179.2L178.6 692.8M184.8 693.8H186L186.6 692.8M180.4 695.6H178.4M184.8 695.6H186.8M180.5 697.2L179.2 698.4M184.7 697.2L186 698.4M181.4 692.4L180.6 691.2M183.8 692.4L184.6 691.2" fill="none" stroke="#ffffff" stroke-width="0.7"/><circle cx="198.3" cy="694.8" r="3.5" fill="none" stroke="#ffffff" stroke-width="0.8"/><path d="M196.9 693.4L199.7 696.2M199.7 693.4L196.9 696.2" stroke="#ffffff" stroke-width="0.7"/><path d="M214.9 691.2L218.9 698.2H210.9Z" fill="none" stroke="#ffffff" stroke-width="0.8" stroke-linejoin="round"/><path d="M214.9 693.5V695.9M214.9 696.7V697.2" stroke="#ffffff" stroke-width="0.7"/></svg>
<div class="t" style="left:204.4px;top:690.9px;font-size:7.4px;line-height:10px;color:#ffffff;letter-spacing:-0.05px">0</div>
<div class="t" style="left:221.4px;top:690.9px;font-size:7.4px;line-height:10px;color:#ffffff;letter-spacing:-0.05px">0</div>
<div class="t" style="left:832px;top:690.9px;font-size:7.4px;line-height:10px;color:#ffffff;letter-spacing:-0.05px">Ln 7, Col 19</div>
<div class="t" style="left:878.2px;top:690.9px;font-size:7.4px;line-height:10px;color:#ffffff;letter-spacing:-0.05px">LF</div>
<div class="t" style="left:893.6px;top:690.9px;font-size:7.4px;line-height:10px;color:#ffffff;letter-spacing:-0.05px">UTF-8</div>
<div class="t" style="left:922.6px;top:690.9px;font-size:7.4px;line-height:10px;color:#ffffff;letter-spacing:-0.05px">Spaces: 4</div>
<div class="t" style="left:963.6px;top:690.9px;font-size:7.4px;line-height:10px;color:#ffffff;letter-spacing:-0.05px">C++</div>
<div class="t" style="left:994.8px;top:690.9px;font-size:7.4px;line-height:10px;color:#ffffff;letter-spacing:-0.05px">1</div>
<svg width="1" height="1"><path d="M986.4 697V694.4a2.8 2.8 0 0 1 4.6-2.1M992.2 694.2V697M985.6 697H993M988.4 698.2H990.2" fill="none" stroke="#ffffff" stroke-width="0.8"/><circle cx="991.9" cy="691.7" r="1.3" fill="#ffffff"/><rect x="1005.8" y="691.6" width="7.8" height="6.6" rx="0.4" fill="none" stroke="#ffffff" stroke-width="0.8"/><path d="M1005.8 693.3H1013.6" stroke="#ffffff" stroke-width="0.8"/></svg>
<div class="a" style="left:0px;top:701px;width:1024px;height:1px;background:#8c8c8c;"></div>
</body></html>
